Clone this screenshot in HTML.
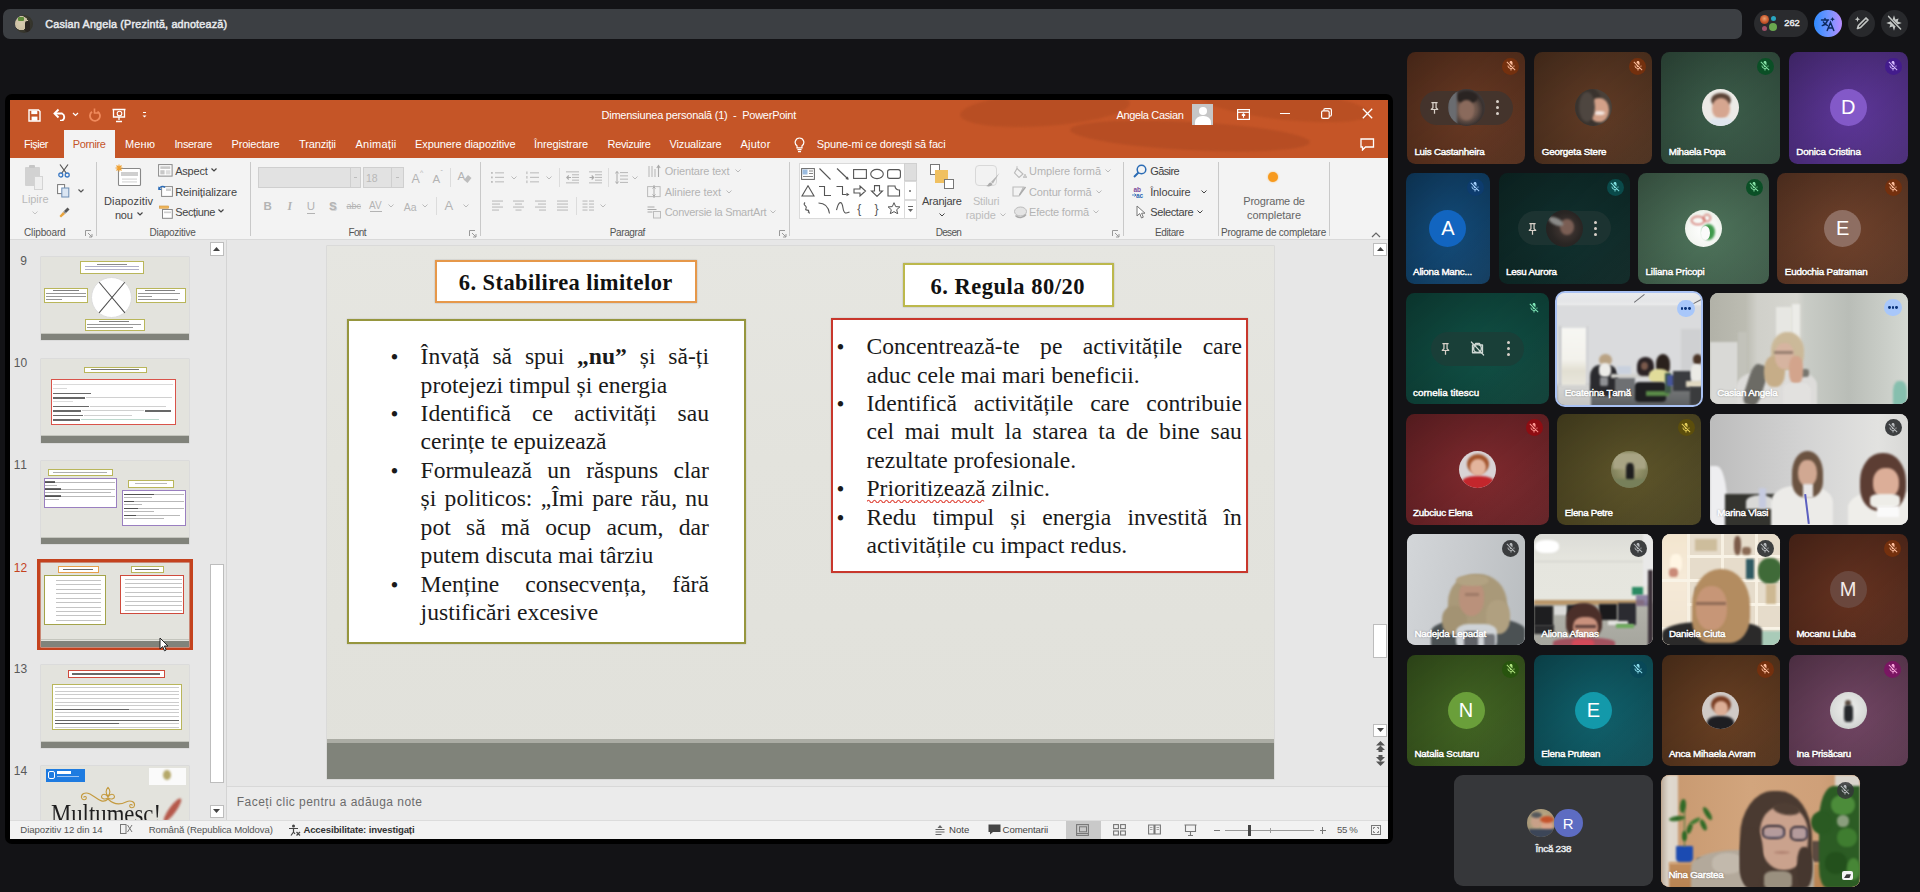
<!DOCTYPE html>
<html><head><meta charset="utf-8"><title>Meet</title><style>
html,body{margin:0;padding:0}
body{width:1920px;height:892px;overflow:hidden;background:#131316;position:relative;font-family:'Liberation Sans',sans-serif}
div,span.t,svg.a{position:absolute;box-sizing:border-box}
span.t{white-space:pre;display:block}
.bl{filter:blur(1.2px)}
</style></head><body>
<div style="left:3.00px;top:9.00px;width:1739.00px;height:30.00px;background:#3c3f43;border-radius:7px;"></div>
<div style="left:15.00px;top:15.00px;width:18.00px;height:18.00px;background:radial-gradient(circle at 35% 45%,#d8cbb0 0,#cbbfa3 45%,#3b3a30 46%,#2a2a24 100%);border-radius:50%;overflow:hidden;"><div style="left:3px;top:2px;width:6px;height:4px;background:#5e8a3a;border-radius:1px"></div><div style="left:10px;top:6px;width:5px;height:11px;background:#2a2622;border-radius:2px"></div></div>
<span class="t" style="left:45.30px;top:18.72px;font:10.8px/1 'Liberation Sans',sans-serif;color:#e8eaed;letter-spacing:0.171px;-webkit-text-stroke:.46px #e8eaed;">Casian Angela (Prezintă, adnotează)</span>
<div style="left:1754.30px;top:9.90px;width:54.00px;height:26.80px;background:#2a2b2e;border-radius:14px;"></div>
<div style="left:1760.00px;top:14.80px;width:9.40px;height:9.40px;background:radial-gradient(circle at 50% 40%,#e8a070 0,#c8562a 55%,#8a3a20 100%);border-radius:50%;"></div>
<div style="left:1770.80px;top:16.00px;width:5.00px;height:5.00px;background:#2aa5c0;border-radius:50%;"></div>
<div style="left:1768.70px;top:23.20px;width:8.20px;height:8.20px;background:#6aa84f;border-radius:50%;"></div>
<div style="left:1761.50px;top:26.30px;width:5.00px;height:5.00px;background:#a0506a;border-radius:50%;"></div>
<span class="t" style="left:1784.30px;top:18.78px;font:9.2px/1 'Liberation Sans',sans-serif;color:#e8eaed;letter-spacing:-0.017px;-webkit-text-stroke:.46px #e8eaed;">262</span>
<div style="left:1814.20px;top:9.50px;width:27.60px;height:27.60px;background:linear-gradient(90deg,#2f8bff 0,#6f95ff 50%,#b98cff 100%);border-radius:50%;"></div>
<svg class="a" style="left:1819.00px;top:14.50px;" width="18" height="18" viewBox="0 0 18 18"><g fill="none" stroke="#0c2a5e" stroke-width="1.5" stroke-linecap="round"><path d="M2.5 5h7M6 3.5v1.5M8.5 5c-.6 2.6-2.4 4.6-5.2 5.6M4.4 7c.8 1.6 2.2 2.8 4 3.4"/><path d="M8.2 15.5l3.3-8 3.3 8M9.4 13h4.2"/></g><path d="M13.5 2l.7 1.6 1.6.7-1.6.7-.7 1.6-.7-1.6-1.6-.7 1.6-.7z" fill="#0c2a5e"/></svg>
<div style="left:1847.90px;top:9.50px;width:27.60px;height:27.60px;background:#28292c;border-radius:50%;"></div>
<svg class="a" style="left:1852.70px;top:14.30px;" width="18" height="18" viewBox="0 0 18 18"><g fill="none" stroke="#c4c7c5" stroke-width="1.7" stroke-linecap="round" stroke-linejoin="round"><path d="M4.5 14.5l1-3 7.5-7.5 2 2-7.5 7.5z"/></g><path d="M4.5 2.5l.8 1.9 1.9.8-1.9.8-.8 1.9-.8-1.9-1.9-.8 1.9-.8z" fill="#c4c7c5"/></svg>
<div style="left:1880.50px;top:9.50px;width:27.60px;height:27.60px;background:#28292c;border-radius:50%;"></div>
<svg class="a" style="left:1885.30px;top:14.30px;" width="18" height="18" viewBox="0 0 18 18"><path d="M9 2.2l1.4 4.2 3.2-1-1 3.2 4.2 1.4-4.2 1.4 1 3.2-3.2-1L9 17.8l-1.4-4.2-3.2 1 1-3.2L1.2 10l4.2-1.4-1-3.2 3.2 1z" fill="#c4c7c5" transform="translate(0,-1)"/><path d="M3 2.5l12.5 13" stroke="#28292c" stroke-width="3"/><path d="M3.6 2.4l12 12.6" stroke="#c4c7c5" stroke-width="1.5" stroke-linecap="round"/></svg>
<div style="left:1407.00px;top:52.00px;width:118.20px;height:111.50px;background:linear-gradient(140deg,rgba(0,0,0,.14) 0,rgba(0,0,0,.04) 40%,rgba(0,0,0,0) 60%,rgba(255,255,255,.03) 100%),radial-gradient(ellipse 75% 80% at 50% 52%,#693923 0,#542e1c 75%,#442517 125%);border-radius:8.5px;overflow:hidden;"></div>
<div style="left:1419.50px;top:90.80px;width:93.20px;height:34.00px;background:rgba(66,52,46,.92);border-radius:17px;"><svg class="a" style="left:7.5px;top:9.5px" width="15" height="15" viewBox="0 0 24 24"><path d="M7 3h10v2h-1.500v7l2.500 2.500v1.500h-5V22h-2v-6H6v-1.500L8.500 12V5H7z M10.500 5v7.800L9 14.300h6l-1.500-1.500V5z" fill="#d8d0c8" fill-rule="evenodd"/></svg><div style="right:13.3px;top:9.4px;width:3.2px;height:3.2px;border-radius:50%;background:#d8d0c8"></div><div style="right:13.3px;top:15.4px;width:3.2px;height:3.2px;border-radius:50%;background:#d8d0c8"></div><div style="right:13.3px;top:21.4px;width:3.2px;height:3.2px;border-radius:50%;background:#d8d0c8"></div></div>
<div style="left:1447.60px;top:89.30px;width:37.00px;height:37.00px;background:radial-gradient(circle at 50% 55%,#8a6e60 0,#6a544a 38%,#3a3230 60%,#4a4a4c 100%);border-radius:50%;overflow:hidden;"><div class="bl" style="left:8px;top:2px;width:22px;height:13px;border-radius:50%;background:#2a2422"></div><div class="bl" style="left:11px;top:11px;width:15px;height:20px;border-radius:45%;background:#8a6a5c"></div><div class="bl" style="left:0;top:0;width:9px;height:37px;background:#6a6c70"></div></div>
<div style="left:1502.10px;top:57.90px;width:17.00px;height:17.00px;background:#74300e;border-radius:50%;filter:blur(.7px);"></div>
<div style="left:1501.60px;top:57.40px;width:18.00px;height:18.00px;"><svg class="a" style="left:3px;top:2.7px" width="12" height="12" viewBox="0 0 24 24"><path fill="#ffbf9f" d="M19 11h-1.700c0 .74-.16 1.430-.430 2.050l1.230 1.230c.56-.98.9-2.090.9-3.280zm-4.020.17c0-.06.02-.11.02-.17V5c0-1.660-1.340-3-3-3S9 3.340 9 5v.18l5.980 5.990zM4.270 3L3 4.270l6.010 6.010V11c0 1.660 1.330 3 2.990 3 .22 0 .44-.03.65-.08l1.660 1.660c-.71.33-1.500.52-2.310.52-2.760 0-5.300-2.100-5.300-5.100H5c0 3.410 2.720 6.230 6 6.720V21h2v-3.280c.91-.13 1.770-.45 2.540-.9L19.730 21 21 19.730 4.270 3z"/></svg></div>
<span class="t" style="left:1414.40px;top:146.77px;font:9.8px/1 'Liberation Sans',sans-serif;color:#fff;letter-spacing:-0.215px;text-shadow:0 0 2px rgba(0,0,0,.55);-webkit-text-stroke:.46px #fff;">Luis Castanheira</span>
<div style="left:1534.30px;top:52.00px;width:118.20px;height:111.50px;background:linear-gradient(140deg,rgba(0,0,0,.14) 0,rgba(0,0,0,.04) 40%,rgba(0,0,0,0) 60%,rgba(255,255,255,.03) 100%),radial-gradient(ellipse 75% 80% at 50% 52%,#613b25 0,#4d301e 75%,#3f2718 125%);border-radius:8.5px;overflow:hidden;"></div>
<div style="left:1575.10px;top:89.30px;width:37.00px;height:37.00px;background:#4a4038;border-radius:50%;overflow:hidden;"><div class="bl" style="left:-2px;top:-2px;width:30px;height:42px;border-radius:50%;background:#3a332e"></div><div class="bl" style="left:14px;top:9px;width:20px;height:24px;border-radius:48%;background:#d2a088"></div><div class="bl" style="left:19px;top:22px;width:11px;height:4px;border-radius:50%;background:#f2e6e0"></div><div class="bl" style="left:4px;top:3px;width:16px;height:30px;border-radius:50%;background:#4e4640"></div></div>
<div style="left:1629.40px;top:57.90px;width:17.00px;height:17.00px;background:#74300e;border-radius:50%;filter:blur(.7px);"></div>
<div style="left:1628.90px;top:57.40px;width:18.00px;height:18.00px;"><svg class="a" style="left:3px;top:2.7px" width="12" height="12" viewBox="0 0 24 24"><path fill="#ffbf9f" d="M19 11h-1.700c0 .74-.16 1.430-.430 2.050l1.230 1.230c.56-.98.9-2.090.9-3.280zm-4.020.17c0-.06.02-.11.02-.17V5c0-1.660-1.340-3-3-3S9 3.340 9 5v.18l5.980 5.990zM4.270 3L3 4.270l6.010 6.010V11c0 1.660 1.330 3 2.990 3 .22 0 .44-.03.65-.08l1.660 1.660c-.71.33-1.500.52-2.310.52-2.760 0-5.300-2.100-5.300-5.100H5c0 3.410 2.720 6.230 6 6.720V21h2v-3.280c.91-.13 1.770-.45 2.540-.9L19.730 21 21 19.730 4.270 3z"/></svg></div>
<span class="t" style="left:1541.70px;top:146.77px;font:9.8px/1 'Liberation Sans',sans-serif;color:#fff;letter-spacing:-0.172px;text-shadow:0 0 2px rgba(0,0,0,.55);-webkit-text-stroke:.46px #fff;">Georgeta Stere</span>
<div style="left:1661.40px;top:52.00px;width:118.60px;height:111.50px;background:linear-gradient(140deg,rgba(0,0,0,.14) 0,rgba(0,0,0,.04) 40%,rgba(0,0,0,0) 60%,rgba(255,255,255,.03) 100%),radial-gradient(ellipse 75% 80% at 50% 52%,#3d5e4b 0,#304b3c 75%,#283d31 125%);border-radius:8.5px;overflow:hidden;"></div>
<div style="left:1702.20px;top:89.30px;width:37.00px;height:37.00px;background:#eceae6;border-radius:50%;overflow:hidden;"><div class="bl" style="left:9px;top:4px;width:20px;height:14px;border-radius:50%;background:#5a4236"></div><div class="bl" style="left:10px;top:9px;width:18px;height:21px;border-radius:48%;background:#d6a690"></div><div class="bl" style="left:6px;top:29px;width:26px;height:12px;border-radius:40%;background:#dfe6ee"></div></div>
<div style="left:1756.90px;top:57.90px;width:17.00px;height:17.00px;background:#0b4f26;border-radius:50%;filter:blur(.7px);"></div>
<div style="left:1756.40px;top:57.40px;width:18.00px;height:18.00px;"><svg class="a" style="left:3px;top:2.7px" width="12" height="12" viewBox="0 0 24 24"><path fill="#86e2a6" d="M19 11h-1.700c0 .74-.16 1.430-.430 2.050l1.230 1.230c.56-.98.9-2.090.9-3.280zm-4.020.17c0-.06.02-.11.02-.17V5c0-1.660-1.340-3-3-3S9 3.340 9 5v.18l5.980 5.990zM4.270 3L3 4.270l6.010 6.010V11c0 1.660 1.330 3 2.990 3 .22 0 .44-.03.65-.08l1.660 1.660c-.71.33-1.500.52-2.310.52-2.760 0-5.300-2.100-5.300-5.100H5c0 3.410 2.720 6.230 6 6.720V21h2v-3.280c.91-.13 1.770-.45 2.540-.9L19.730 21 21 19.730 4.270 3z"/></svg></div>
<span class="t" style="left:1668.80px;top:146.77px;font:9.8px/1 'Liberation Sans',sans-serif;color:#fff;letter-spacing:-0.286px;text-shadow:0 0 2px rgba(0,0,0,.55);-webkit-text-stroke:.46px #fff;">Mihaela Popa</span>
<div style="left:1788.80px;top:52.00px;width:118.80px;height:111.50px;background:linear-gradient(140deg,rgba(0,0,0,.14) 0,rgba(0,0,0,.04) 40%,rgba(0,0,0,0) 60%,rgba(255,255,255,.03) 100%),radial-gradient(ellipse 75% 80% at 50% 52%,#5e379a 0,#4b2c7b 75%,#3d2465 125%);border-radius:8.5px;overflow:hidden;"></div>
<div style="left:1829.70px;top:89.30px;width:37.00px;height:37.00px;background:#8359c8;border-radius:50%;"><span class="t" style="left:0;top:0;width:37px;height:37px;line-height:37.5px;text-align:center;font-size:20px;color:#fff">D</span></div>
<div style="left:1884.50px;top:57.90px;width:17.00px;height:17.00px;background:#431c8c;border-radius:50%;filter:blur(.7px);"></div>
<div style="left:1884.00px;top:57.40px;width:18.00px;height:18.00px;"><svg class="a" style="left:3px;top:2.7px" width="12" height="12" viewBox="0 0 24 24"><path fill="#d6bdff" d="M19 11h-1.700c0 .74-.16 1.430-.430 2.050l1.230 1.230c.56-.98.9-2.090.9-3.280zm-4.020.17c0-.06.02-.11.02-.17V5c0-1.660-1.340-3-3-3S9 3.340 9 5v.18l5.980 5.990zM4.270 3L3 4.270l6.010 6.010V11c0 1.660 1.330 3 2.990 3 .22 0 .44-.03.65-.08l1.660 1.660c-.71.33-1.500.52-2.310.52-2.760 0-5.300-2.100-5.300-5.100H5c0 3.410 2.720 6.230 6 6.720V21h2v-3.280c.91-.13 1.770-.45 2.540-.9L19.730 21 21 19.730 4.270 3z"/></svg></div>
<span class="t" style="left:1796.20px;top:146.77px;font:9.8px/1 'Liberation Sans',sans-serif;color:#fff;letter-spacing:-0.123px;text-shadow:0 0 2px rgba(0,0,0,.55);-webkit-text-stroke:.46px #fff;">Donica Cristina</span>
<div style="left:1405.70px;top:172.60px;width:84.10px;height:111.00px;background:linear-gradient(140deg,rgba(0,0,0,.14) 0,rgba(0,0,0,.04) 40%,rgba(0,0,0,0) 60%,rgba(255,255,255,.03) 100%),radial-gradient(ellipse 75% 80% at 50% 52%,#134b79 0,#0f3c61 75%,#0c314f 125%);border-radius:8.5px;overflow:hidden;"></div>
<div style="left:1429.30px;top:209.90px;width:37.00px;height:37.00px;background:#1265c0;border-radius:50%;"><span class="t" style="left:0;top:0;width:37px;height:37px;line-height:37.5px;text-align:center;font-size:20px;color:#fff">A</span></div>
<div style="left:1466.70px;top:178.50px;width:17.00px;height:17.00px;background:#0d3c6e;border-radius:50%;filter:blur(.7px);"></div>
<div style="left:1466.20px;top:178.00px;width:18.00px;height:18.00px;"><svg class="a" style="left:3px;top:2.7px" width="12" height="12" viewBox="0 0 24 24"><path fill="#a3cffc" d="M19 11h-1.700c0 .74-.16 1.430-.430 2.050l1.230 1.230c.56-.98.9-2.090.9-3.280zm-4.020.17c0-.06.02-.11.02-.17V5c0-1.660-1.340-3-3-3S9 3.340 9 5v.18l5.980 5.990zM4.270 3L3 4.270l6.010 6.010V11c0 1.660 1.330 3 2.990 3 .22 0 .44-.03.65-.08l1.660 1.660c-.71.33-1.500.52-2.310.52-2.760 0-5.300-2.100-5.300-5.100H5c0 3.410 2.720 6.230 6 6.720V21h2v-3.280c.91-.13 1.770-.45 2.540-.9L19.730 21 21 19.730 4.270 3z"/></svg></div>
<span class="t" style="left:1413.10px;top:266.87px;font:9.8px/1 'Liberation Sans',sans-serif;color:#fff;letter-spacing:-0.236px;text-shadow:0 0 2px rgba(0,0,0,.55);-webkit-text-stroke:.46px #fff;">Aliona Manc...</span>
<div style="left:1498.60px;top:172.60px;width:131.10px;height:111.00px;background:linear-gradient(140deg,rgba(0,0,0,.14) 0,rgba(0,0,0,.04) 40%,rgba(0,0,0,0) 60%,rgba(255,255,255,.03) 100%),radial-gradient(ellipse 75% 80% at 50% 52%,#10302e 0,#0d2725 75%,#0b201e 125%);border-radius:8.5px;overflow:hidden;"></div>
<div style="left:1517.50px;top:211.40px;width:93.20px;height:34.00px;background:rgba(30,52,50,.95);border-radius:17px;"><svg class="a" style="left:7.5px;top:9.5px" width="15" height="15" viewBox="0 0 24 24"><path d="M7 3h10v2h-1.500v7l2.500 2.500v1.500h-5V22h-2v-6H6v-1.500L8.500 12V5H7z M10.500 5v7.800L9 14.300h6l-1.500-1.500V5z" fill="#d8d0c8" fill-rule="evenodd"/></svg><div style="right:13.3px;top:9.4px;width:3.2px;height:3.2px;border-radius:50%;background:#d8d0c8"></div><div style="right:13.3px;top:15.4px;width:3.2px;height:3.2px;border-radius:50%;background:#d8d0c8"></div><div style="right:13.3px;top:21.4px;width:3.2px;height:3.2px;border-radius:50%;background:#d8d0c8"></div></div>
<div style="left:1545.60px;top:209.90px;width:37.00px;height:37.00px;background:radial-gradient(circle at 55% 50%,#4a3c38 0,#2a2624 55%,#1e1e1e 100%);border-radius:50%;overflow:hidden;"><div class="bl" style="left:14px;top:9px;width:14px;height:16px;border-radius:50%;background:#7a5e54"></div><div class="bl" style="left:2px;top:8px;width:16px;height:7px;border-radius:50%;background:#8a8a88;transform:rotate(25deg)"></div></div>
<div style="left:1606.60px;top:178.50px;width:17.00px;height:17.00px;background:#0a4a4a;border-radius:50%;filter:blur(.7px);"></div>
<div style="left:1606.10px;top:178.00px;width:18.00px;height:18.00px;"><svg class="a" style="left:3px;top:2.7px" width="12" height="12" viewBox="0 0 24 24"><path fill="#80e0e0" d="M19 11h-1.700c0 .74-.16 1.430-.430 2.050l1.230 1.230c.56-.98.9-2.090.9-3.280zm-4.020.17c0-.06.02-.11.02-.17V5c0-1.660-1.340-3-3-3S9 3.340 9 5v.18l5.980 5.990zM4.270 3L3 4.270l6.010 6.010V11c0 1.660 1.330 3 2.990 3 .22 0 .44-.03.65-.08l1.660 1.660c-.71.33-1.500.52-2.310.52-2.760 0-5.300-2.100-5.300-5.100H5c0 3.410 2.720 6.230 6 6.720V21h2v-3.280c.91-.13 1.770-.45 2.540-.9L19.730 21 21 19.730 4.270 3z"/></svg></div>
<span class="t" style="left:1506.00px;top:266.87px;font:9.8px/1 'Liberation Sans',sans-serif;color:#fff;letter-spacing:-0.186px;text-shadow:0 0 2px rgba(0,0,0,.55);-webkit-text-stroke:.46px #fff;">Lesu Aurora</span>
<div style="left:1638.10px;top:172.60px;width:130.90px;height:111.00px;background:linear-gradient(140deg,rgba(0,0,0,.14) 0,rgba(0,0,0,.04) 40%,rgba(0,0,0,0) 60%,rgba(255,255,255,.03) 100%),radial-gradient(ellipse 75% 80% at 50% 52%,#4f755c 0,#3f5d4a 75%,#344c3c 125%);border-radius:8.5px;overflow:hidden;"></div>
<div style="left:1685.00px;top:209.90px;width:37.00px;height:37.00px;background:radial-gradient(circle at 50% 55%,#fff 0,#f4f6f2 55%,#dfe9dc 100%);border-radius:50%;overflow:hidden;"><div class="bl" style="left:17px;top:14px;width:13px;height:16px;border-radius:50%;background:#3f9a4c"></div><div style="left:16px;top:16px;width:9px;height:14px;border-radius:50% 50% 50% 50%;background:#fbfbfb"></div><div class="bl" style="left:6px;top:6px;width:14px;height:9px;border-radius:50%;border:1.600px solid #c23a30"></div><div class="bl" style="left:18px;top:4px;width:8px;height:8px;border-radius:50%;border:1.400px solid #c23a30"></div></div>
<div style="left:1745.90px;top:178.50px;width:17.00px;height:17.00px;background:#0b4f26;border-radius:50%;filter:blur(.7px);"></div>
<div style="left:1745.40px;top:178.00px;width:18.00px;height:18.00px;"><svg class="a" style="left:3px;top:2.7px" width="12" height="12" viewBox="0 0 24 24"><path fill="#86e2a6" d="M19 11h-1.700c0 .74-.16 1.430-.430 2.050l1.230 1.230c.56-.98.9-2.090.9-3.280zm-4.020.17c0-.06.02-.11.02-.17V5c0-1.660-1.340-3-3-3S9 3.340 9 5v.18l5.980 5.990zM4.270 3L3 4.270l6.010 6.010V11c0 1.660 1.330 3 2.990 3 .22 0 .44-.03.65-.08l1.660 1.660c-.71.33-1.500.52-2.310.52-2.760 0-5.300-2.100-5.300-5.100H5c0 3.410 2.720 6.230 6 6.720V21h2v-3.280c.91-.13 1.770-.45 2.540-.9L19.730 21 21 19.730 4.270 3z"/></svg></div>
<span class="t" style="left:1645.50px;top:266.87px;font:9.8px/1 'Liberation Sans',sans-serif;color:#fff;letter-spacing:-0.121px;text-shadow:0 0 2px rgba(0,0,0,.55);-webkit-text-stroke:.46px #fff;">Liliana Pricopi</span>
<div style="left:1777.40px;top:172.60px;width:130.50px;height:111.00px;background:linear-gradient(140deg,rgba(0,0,0,.14) 0,rgba(0,0,0,.04) 40%,rgba(0,0,0,0) 60%,rgba(255,255,255,.03) 100%),radial-gradient(ellipse 75% 80% at 50% 52%,#70422c 0,#5a3523 75%,#492b1d 125%);border-radius:8.5px;overflow:hidden;"></div>
<div style="left:1824.10px;top:209.90px;width:37.00px;height:37.00px;background:#8e6e62;border-radius:50%;"><span class="t" style="left:0;top:0;width:37px;height:37px;line-height:37.5px;text-align:center;font-size:20px;color:#fff">E</span></div>
<div style="left:1884.80px;top:178.50px;width:17.00px;height:17.00px;background:#74300e;border-radius:50%;filter:blur(.7px);"></div>
<div style="left:1884.30px;top:178.00px;width:18.00px;height:18.00px;"><svg class="a" style="left:3px;top:2.7px" width="12" height="12" viewBox="0 0 24 24"><path fill="#ffbf9f" d="M19 11h-1.700c0 .74-.16 1.430-.430 2.050l1.230 1.230c.56-.98.9-2.090.9-3.280zm-4.020.17c0-.06.02-.11.02-.17V5c0-1.660-1.340-3-3-3S9 3.340 9 5v.18l5.980 5.990zM4.270 3L3 4.270l6.010 6.010V11c0 1.660 1.330 3 2.990 3 .22 0 .44-.03.65-.08l1.660 1.660c-.71.33-1.500.52-2.310.52-2.760 0-5.300-2.100-5.300-5.100H5c0 3.410 2.720 6.230 6 6.720V21h2v-3.280c.91-.13 1.770-.45 2.540-.9L19.730 21 21 19.730 4.270 3z"/></svg></div>
<span class="t" style="left:1784.80px;top:266.87px;font:9.8px/1 'Liberation Sans',sans-serif;color:#fff;letter-spacing:-0.199px;text-shadow:0 0 2px rgba(0,0,0,.55);-webkit-text-stroke:.46px #fff;">Eudochia Patraman</span>
<div style="left:1405.70px;top:292.80px;width:143.00px;height:111.70px;background:linear-gradient(140deg,rgba(0,0,0,.14) 0,rgba(0,0,0,.04) 40%,rgba(0,0,0,0) 60%,rgba(255,255,255,.03) 100%),radial-gradient(ellipse 75% 80% at 50% 52%,#105045 0,#0d4037 75%,#0b352d 125%);border-radius:8.5px;overflow:hidden;"></div>
<div style="left:1430.60px;top:331.60px;width:93.20px;height:34.00px;background:rgba(26,62,56,.96);border-radius:17px;"><svg class="a" style="left:7.5px;top:9.5px" width="15" height="15" viewBox="0 0 24 24"><path d="M7 3h10v2h-1.500v7l2.500 2.500v1.500h-5V22h-2v-6H6v-1.500L8.500 12V5H7z M10.500 5v7.800L9 14.300h6l-1.500-1.500V5z" fill="#d8d0c8" fill-rule="evenodd"/></svg><div style="right:13.3px;top:9.4px;width:3.2px;height:3.2px;border-radius:50%;background:#d8d0c8"></div><div style="right:13.3px;top:15.4px;width:3.2px;height:3.2px;border-radius:50%;background:#d8d0c8"></div><div style="right:13.3px;top:21.4px;width:3.2px;height:3.2px;border-radius:50%;background:#d8d0c8"></div><svg class="a" style="left:38px;top:8.500px" width="17" height="17" viewBox="0 0 24 24"><g fill="none" stroke="#cfd8d4" stroke-width="2"><circle cx="12" cy="12" r="5.500"/><path d="M5 7h3l1.500-2h5L16 7h3v11H5z" stroke-linejoin="round"/><path d="M3.500 3l17 18" stroke-linecap="round"/></g></svg></div>
<div style="left:1525.10px;top:298.90px;width:18.00px;height:18.00px;"><svg class="a" style="left:3px;top:2.7px" width="12" height="12" viewBox="0 0 24 24"><path fill="#7fe6b8" d="M19 11h-1.700c0 .74-.16 1.430-.430 2.050l1.230 1.230c.56-.98.9-2.090.9-3.280zm-4.020.17c0-.06.02-.11.02-.17V5c0-1.660-1.340-3-3-3S9 3.340 9 5v.18l5.980 5.990zM4.270 3L3 4.270l6.010 6.010V11c0 1.660 1.330 3 2.990 3 .22 0 .44-.03.65-.08l1.660 1.660c-.71.33-1.500.52-2.310.52-2.760 0-5.300-2.100-5.300-5.100H5c0 3.410 2.720 6.230 6 6.720V21h2v-3.280c.91-.13 1.770-.45 2.540-.9L19.730 21 21 19.730 4.270 3z"/></svg></div>
<span class="t" style="left:1413.10px;top:387.77px;font:9.8px/1 'Liberation Sans',sans-serif;color:#fff;letter-spacing:0.052px;text-shadow:0 0 2px rgba(0,0,0,.55);-webkit-text-stroke:.46px #fff;">cornelia titescu</span>
<div style="left:1554.90px;top:290.90px;width:148.20px;height:116.20px;background:#dadbdd;border-radius:10px;overflow:hidden;border:2.700px solid #a9c1f3;"><div style="left:0px;top:0px;width:146px;height:12px;background:linear-gradient(#e9eaec,#e2e3e5);"></div><div class="bl" style="left:0px;top:10px;width:146px;height:2.2px;background:#eceded;"></div><div class="bl" style="left:0px;top:92px;width:146px;height:22px;background:linear-gradient(#7b7d7e,#5c5f61);"></div><div class="bl" style="left:0px;top:90px;width:34px;height:24px;background:linear-gradient(#d6d6d4,#c4c4c2);"></div><div class="bl" style="left:4.5px;top:35px;width:25px;height:57px;background:linear-gradient(#f7f7f3 0,#f3f2ec 55%,#e2dfd2 75%,#e8e6dc 100%);"></div><div class="bl" style="left:2.6px;top:33px;width:1.6px;height:60px;background:#c6c7c8;"></div><div class="bl" style="left:30px;top:33px;width:1.6px;height:60px;background:#c9cacb;"></div><div class="bl" style="left:124.5px;top:36px;width:20px;height:42px;background:#cfd0d2;"></div><div class="bl" style="left:33px;top:72px;width:28px;height:31px;background:#2a2a2e;border-radius:35% 35% 15% 15%"></div><div class="bl" style="left:42.5px;top:61px;width:12.5px;height:12px;background:#b9a283;border-radius:50%"></div><div class="bl" style="left:42px;top:70px;width:12px;height:14px;background:#ecebe8;border-radius:40%"></div><div class="bl" style="left:43px;top:84px;width:8px;height:9px;background:#8f9094;border-radius:20%"></div><div class="bl" style="left:54px;top:81px;width:46px;height:4.5px;background:#d2d2cd;"></div><div class="bl" style="left:60px;top:73px;width:14px;height:8px;background:#c9d1de;"></div><div class="bl" style="left:58px;top:85px;width:20px;height:16px;background:#6e7073;"></div><div class="bl" style="left:80px;top:64px;width:17px;height:19px;background:#2b2325;border-radius:45% 45% 30% 30%"></div><div class="bl" style="left:84px;top:69px;width:7px;height:8px;background:#7a5a4c;border-radius:50%"></div><div class="bl" style="left:99px;top:61px;width:14px;height:20px;background:#2a211c;border-radius:48% 48% 35% 35%"></div><div class="bl" style="left:92px;top:76px;width:20px;height:14px;background:#e1dc9a;border-radius:40%"></div><div class="bl" style="left:78px;top:89.5px;width:31px;height:20px;background:#1f1f21;border-radius:15%"></div><div class="bl" style="left:89.5px;top:98px;width:22.5px;height:5.5px;background:#5a8a48;"></div><div class="bl" style="left:108px;top:80px;width:6px;height:20px;background:#3f5a46;"></div><div class="bl" style="left:110.5px;top:82.5px;width:8.5px;height:11px;background:#46559a;"></div><div class="bl" style="left:116px;top:78.5px;width:18.5px;height:20px;background:#3a3c40;"></div><div class="bl" style="left:136px;top:61.5px;width:9px;height:11px;background:#4a3426;border-radius:50%"></div><div class="bl" style="left:134px;top:71.5px;width:11px;height:17px;background:#ecebe6;border-radius:35%"></div><div class="bl" style="left:129.5px;top:88px;width:16px;height:6px;background:#e0d8c2;"></div><div class="bl" style="left:133px;top:94px;width:13px;height:18px;background:#3a3b3d;"></div><div style="left:76.500px;top:5px;width:12.500px;height:1.300px;background:#6c6d72;transform:rotate(-38deg)"></div><div style="left:136px;top:8px;width:9px;height:1.300px;background:#6c6d72;transform:rotate(-28deg)"></div></div>
<div style="left:1677.10px;top:299.60px;width:17.60px;height:17.60px;background:#a8c7fa;border-radius:50%;"><div style="left:3.6px;top:7.4px;width:2.8px;height:2.8px;border-radius:50%;background:#0a337a"></div><div style="left:7.4px;top:7.4px;width:2.8px;height:2.8px;border-radius:50%;background:#0a337a"></div><div style="left:11.2px;top:7.4px;width:2.8px;height:2.8px;border-radius:50%;background:#0a337a"></div></div>
<span class="t" style="left:1564.80px;top:387.77px;font:9.8px/1 'Liberation Sans',sans-serif;color:#fff;letter-spacing:-0.235px;text-shadow:0 0 2px rgba(0,0,0,.55);-webkit-text-stroke:.46px #fff;">Ecaterina Țarnă</span>
<div style="left:1709.80px;top:292.80px;width:198.10px;height:111.70px;background:#cdcfc8;border-radius:8.500px;overflow:hidden;"><div style="left:0.0px;top:0.0px;width:198.2px;height:112.1px;background:linear-gradient(90deg,#b2b2a8 0,#bcbcb2 18%,#d0d0ca 24%,#d6d6d0 44%,#c9ccc6 48%,#b9bdb7 70%,#cdd1cb 92%,#d4d8d2 100%);"></div><div class="bl" style="left:66.5px;top:14.3px;width:16.1px;height:37.8px;background:#e7e7e3;"></div><div class="bl" style="left:82.7px;top:11.5px;width:7.7px;height:40.6px;background:#ecece8;"></div><div class="bl" style="left:0.0px;top:49.3px;width:28.7px;height:62.8px;background:#d9d9d6;"></div><div class="bl" style="left:28.7px;top:39.5px;width:8.4px;height:72.6px;background:#c2c2ba;"></div><div class="bl" style="left:26.6px;top:75.9px;width:80.6px;height:39.2px;background:#dddcda;border-radius:45% 40% 0 0"></div><div class="bl" style="left:37.1px;top:71.7px;width:16.8px;height:42.0px;background:#6c6b65;border-radius:30%;transform:rotate(18deg)"></div><div class="bl" style="left:90.4px;top:75.9px;width:9.1px;height:8.4px;background:#77756e;border-radius:30%"></div><div class="bl" style="left:60.9px;top:38.8px;width:32.9px;height:38.5px;background:#cbb999;border-radius:48% 48% 40% 40%"></div><div class="bl" style="left:54.6px;top:63.3px;width:20.3px;height:30.8px;background:#c6ad88;border-radius:45%"></div><div class="bl" style="left:65.1px;top:50.7px;width:19.6px;height:25.2px;background:#d6b4a0;border-radius:45%"></div><div class="bl" style="left:64.4px;top:58.0px;width:18.9px;height:2.8px;background:#5a4a42;opacity:.5"></div><div class="bl" style="left:79.2px;top:63.3px;width:14.0px;height:28.0px;background:#d3a48c;border-radius:40%"></div><div class="bl" style="left:73.6px;top:89.9px;width:28.0px;height:22.1px;background:#e2e1df;border-radius:30% 30% 0 0"></div><div class="bl" style="left:183.5px;top:88.5px;width:13.3px;height:25.2px;background:#86bfae;border-radius:40% 40% 0 0"></div></div>
<div style="left:1884.30px;top:298.80px;width:17.60px;height:17.60px;background:#a8c7fa;border-radius:50%;"><div style="left:3.6px;top:7.4px;width:2.8px;height:2.8px;border-radius:50%;background:#0a337a"></div><div style="left:7.4px;top:7.4px;width:2.8px;height:2.8px;border-radius:50%;background:#0a337a"></div><div style="left:11.2px;top:7.4px;width:2.8px;height:2.8px;border-radius:50%;background:#0a337a"></div></div>
<span class="t" style="left:1717.20px;top:387.77px;font:9.8px/1 'Liberation Sans',sans-serif;color:#fff;letter-spacing:-0.231px;text-shadow:0 0 2px rgba(0,0,0,.55);-webkit-text-stroke:.46px #fff;">Casian Angela</span>
<div style="left:1405.70px;top:413.50px;width:143.00px;height:111.50px;background:linear-gradient(140deg,rgba(0,0,0,.14) 0,rgba(0,0,0,.04) 40%,rgba(0,0,0,0) 60%,rgba(255,255,255,.03) 100%),radial-gradient(ellipse 75% 80% at 50% 52%,#802a2e 0,#662125 75%,#541b1e 125%);border-radius:8.5px;overflow:hidden;"></div>
<div style="left:1458.70px;top:450.80px;width:37.00px;height:37.00px;background:#d9d3d6;border-radius:50%;overflow:hidden;"><div class="bl" style="left:8px;top:3px;width:22px;height:20px;border-radius:50%;background:#a3552e"></div><div class="bl" style="left:11px;top:8px;width:16px;height:17px;border-radius:48%;background:#e3b49c"></div><div class="bl" style="left:3px;top:25px;width:32px;height:16px;border-radius:40% 40% 0 0;background:#c3262c"></div></div>
<div style="left:1525.60px;top:419.40px;width:17.00px;height:17.00px;background:#8f0d12;border-radius:50%;filter:blur(.7px);"></div>
<div style="left:1525.10px;top:418.90px;width:18.00px;height:18.00px;"><svg class="a" style="left:3px;top:2.7px" width="12" height="12" viewBox="0 0 24 24"><path fill="#ff9892" d="M19 11h-1.700c0 .74-.16 1.430-.430 2.050l1.230 1.230c.56-.98.9-2.090.9-3.280zm-4.020.17c0-.06.02-.11.02-.17V5c0-1.660-1.340-3-3-3S9 3.340 9 5v.18l5.980 5.990zM4.270 3L3 4.270l6.010 6.010V11c0 1.660 1.330 3 2.990 3 .22 0 .44-.03.65-.08l1.660 1.660c-.71.33-1.500.52-2.310.52-2.760 0-5.300-2.100-5.300-5.100H5c0 3.410 2.720 6.230 6 6.720V21h2v-3.280c.91-.13 1.770-.45 2.540-.9L19.730 21 21 19.730 4.270 3z"/></svg></div>
<span class="t" style="left:1413.10px;top:508.27px;font:9.8px/1 'Liberation Sans',sans-serif;color:#fff;letter-spacing:-0.223px;text-shadow:0 0 2px rgba(0,0,0,.55);-webkit-text-stroke:.46px #fff;">Zubciuc Elena</span>
<div style="left:1557.40px;top:413.50px;width:143.30px;height:111.50px;background:linear-gradient(140deg,rgba(0,0,0,.14) 0,rgba(0,0,0,.04) 40%,rgba(0,0,0,0) 60%,rgba(255,255,255,.03) 100%),radial-gradient(ellipse 75% 80% at 50% 52%,#5e552a 0,#4b4421 75%,#3d371b 125%);border-radius:8.5px;overflow:hidden;"></div>
<div style="left:1610.50px;top:450.80px;width:37.00px;height:37.00px;background:radial-gradient(circle at 50% 40%,#b0a888 0,#8a8a62 50%,#6a6a4a 100%);border-radius:50%;overflow:hidden;"><div class="bl" style="left:2px;top:2px;width:33px;height:16px;background:#a8a484"></div><div class="bl" style="left:15px;top:12px;width:8px;height:20px;border-radius:30%;background:#1e1e1e"></div><div class="bl" style="left:0;top:28px;width:37px;height:9px;background:#77805a"></div></div>
<div style="left:1677.60px;top:419.40px;width:17.00px;height:17.00px;background:#5c4e0c;border-radius:50%;filter:blur(.7px);"></div>
<div style="left:1677.10px;top:418.90px;width:18.00px;height:18.00px;"><svg class="a" style="left:3px;top:2.7px" width="12" height="12" viewBox="0 0 24 24"><path fill="#e6cf5a" d="M19 11h-1.700c0 .74-.16 1.430-.430 2.050l1.230 1.230c.56-.98.9-2.090.9-3.280zm-4.020.17c0-.06.02-.11.02-.17V5c0-1.660-1.340-3-3-3S9 3.340 9 5v.18l5.980 5.990zM4.270 3L3 4.270l6.010 6.010V11c0 1.660 1.330 3 2.990 3 .22 0 .44-.03.65-.08l1.660 1.660c-.71.33-1.500.52-2.310.52-2.760 0-5.300-2.100-5.300-5.100H5c0 3.410 2.720 6.230 6 6.720V21h2v-3.280c.91-.13 1.770-.45 2.540-.9L19.730 21 21 19.730 4.270 3z"/></svg></div>
<span class="t" style="left:1564.80px;top:508.27px;font:9.8px/1 'Liberation Sans',sans-serif;color:#fff;letter-spacing:-0.310px;text-shadow:0 0 2px rgba(0,0,0,.55);-webkit-text-stroke:.46px #fff;">Elena Petre</span>
<div style="left:1709.80px;top:413.50px;width:198.10px;height:111.50px;background:#d0d0d0;border-radius:8.500px;overflow:hidden;"><div style="left:0;top:0;width:198px;height:112px;background:linear-gradient(90deg,#bcbcbc,#d2d2d2 45%,#e2e2e0 85%,#d8d8d6)"></div><div class="bl" style="left:0;top:52px;width:17px;height:62px;border-radius:0 60% 0 0;background:#eeeef0"></div><div class="bl" style="left:15px;top:80px;width:50px;height:34px;background:#34342f"></div><div class="bl" style="left:36px;top:81px;width:28px;height:14px;border-radius:50% 50% 0 0;background:#d9d9d7"></div><div class="bl" style="left:49px;top:74px;width:7px;height:20px;background:#c6cbe0"></div><div class="bl" style="left:61px;top:72px;width:62px;height:44px;border-radius:38% 38% 0 0;background:#ecebe8"></div><div class="bl" style="left:82px;top:37px;width:31px;height:46px;border-radius:48% 48% 35% 35%;background:#6b5341"></div><div class="bl" style="left:88px;top:46px;width:19px;height:26px;border-radius:45%;background:#d1a892"></div><div class="bl" style="left:93px;top:70px;width:10px;height:14px;background:#e8e6e6"></div><div style="left:96px;top:80px;width:1.500px;height:30px;background:#5b5fc0;transform:rotate(-7deg)"></div><div class="bl" style="left:138px;top:78px;width:62px;height:38px;border-radius:42% 0 0 0;background:#efeeea"></div><div class="bl" style="left:150px;top:39px;width:46px;height:58px;border-radius:48% 48% 40% 40%;background:#5c3d33"></div><div class="bl" style="left:163px;top:54px;width:26px;height:30px;border-radius:45%;background:#dcae98"></div><div class="bl" style="left:160px;top:80px;width:30px;height:14px;border-radius:30%;background:#eeede8"></div><div class="bl" style="left:167px;top:92px;width:22px;height:11px;background:#fafafa"></div></div>
<div style="left:1884.80px;top:419.40px;width:17.00px;height:17.00px;background:rgba(52,54,56,.95);border-radius:50%;filter:blur(.7px);"></div>
<div style="left:1884.30px;top:418.90px;width:18.00px;height:18.00px;"><svg class="a" style="left:3px;top:2.7px" width="12" height="12" viewBox="0 0 24 24"><path fill="#b8bbbe" d="M19 11h-1.700c0 .74-.16 1.430-.430 2.050l1.230 1.230c.56-.98.9-2.090.9-3.280zm-4.020.17c0-.06.02-.11.02-.17V5c0-1.660-1.340-3-3-3S9 3.340 9 5v.18l5.980 5.990zM4.270 3L3 4.270l6.010 6.010V11c0 1.660 1.330 3 2.990 3 .22 0 .44-.03.65-.08l1.660 1.660c-.71.33-1.500.52-2.310.52-2.760 0-5.300-2.100-5.300-5.100H5c0 3.410 2.720 6.230 6 6.720V21h2v-3.280c.91-.13 1.770-.45 2.540-.9L19.730 21 21 19.730 4.270 3z"/></svg></div>
<span class="t" style="left:1717.20px;top:508.27px;font:9.8px/1 'Liberation Sans',sans-serif;color:#fff;letter-spacing:-0.235px;text-shadow:0 0 2px rgba(0,0,0,.55);-webkit-text-stroke:.46px #fff;">Marina Vlasi</span>
<div style="left:1407.00px;top:533.80px;width:118.10px;height:111.70px;background:#c8cace;border-radius:8.500px;overflow:hidden;"><div style="left:0.0px;top:0.0px;width:118.2px;height:113.8px;background:linear-gradient(100deg,#d3d6d9 0,#c8cbce 45%,#b9bdc0 100%);"></div><div class="bl" style="left:24.3px;top:85.3px;width:93.9px;height:31.3px;background:#4b5153;border-radius:40% 35% 0 0"></div><div class="bl" style="left:41.0px;top:40.1px;width:59.1px;height:61.2px;background:#a99979;border-radius:46% 48% 38% 40%"></div><div class="bl" style="left:34.8px;top:72.0px;width:25.0px;height:29.2px;background:#a39373;border-radius:45%"></div><div class="bl" style="left:79.3px;top:66.5px;width:23.6px;height:33.4px;background:#b0a080;border-radius:45%"></div><div class="bl" style="left:51.5px;top:47.7px;width:25.7px;height:34.1px;background:#ba917b;border-radius:42% 42% 48% 48%"></div><div class="bl" style="left:48.7px;top:40.8px;width:33.4px;height:11.8px;background:#b2a282;border-radius:50%"></div><div class="bl" style="left:48.7px;top:90.1px;width:41.7px;height:26.4px;background:#cfd3d7;border-radius:30%"></div><div class="bl" style="left:57.0px;top:97.1px;width:13.9px;height:19.5px;background:#44464c;border-radius:20%;opacity:.8"></div><div class="bl" style="left:76.5px;top:99.9px;width:11.1px;height:16.7px;background:#4a4c52;border-radius:20%;opacity:.7"></div><div class="bl" style="left:58.4px;top:59.5px;width:13.9px;height:2.8px;background:#6a5044;opacity:.35"></div></div>
<div style="left:1502.00px;top:539.70px;width:17.00px;height:17.00px;background:rgba(52,54,56,.95);border-radius:50%;filter:blur(.7px);"></div>
<div style="left:1501.50px;top:539.20px;width:18.00px;height:18.00px;"><svg class="a" style="left:3px;top:2.7px" width="12" height="12" viewBox="0 0 24 24"><path fill="#b8bbbe" d="M19 11h-1.700c0 .74-.16 1.430-.430 2.050l1.230 1.230c.56-.98.9-2.090.9-3.280zm-4.020.17c0-.06.02-.11.02-.17V5c0-1.660-1.340-3-3-3S9 3.340 9 5v.18l5.980 5.990zM4.270 3L3 4.270l6.010 6.010V11c0 1.660 1.330 3 2.990 3 .22 0 .44-.03.65-.08l1.660 1.660c-.71.33-1.500.52-2.310.52-2.760 0-5.300-2.100-5.300-5.100H5c0 3.410 2.720 6.230 6 6.720V21h2v-3.280c.91-.13 1.770-.45 2.540-.9L19.730 21 21 19.730 4.270 3z"/></svg></div>
<span class="t" style="left:1414.40px;top:628.77px;font:9.8px/1 'Liberation Sans',sans-serif;color:#fff;letter-spacing:-0.197px;text-shadow:0 0 2px rgba(0,0,0,.55);-webkit-text-stroke:.46px #fff;">Nadejda Lepadat</span>
<div style="left:1533.90px;top:533.80px;width:118.80px;height:111.70px;background:#dcdcd8;border-radius:8.500px;overflow:hidden;"><div style="left:0.0px;top:0.0px;width:118.9px;height:113.8px;background:linear-gradient(#dcdcd7 0,#e5e5de 22%,#e6e6df 58%,#b2b2aa 62%,#a5a59d 100%);"></div><div class="bl" style="left:0.7px;top:6.0px;width:24.8px;height:12.9px;background:#ffffff;border-radius:40%"></div><div class="bl" style="left:0.0px;top:27.0px;width:110.6px;height:1.4px;background:#cfcfca;"></div><div class="bl" style="left:109.2px;top:0.0px;width:9.7px;height:52.6px;background:#e9e9e8;"></div><div class="bl" style="left:0.0px;top:66.2px;width:109.9px;height:4.7px;background:#b9976b;"></div><div class="bl" style="left:20.2px;top:72.0px;width:12.5px;height:9.0px;background:#dadad8;"></div><div class="bl" style="left:0.0px;top:71.8px;width:19.6px;height:20.4px;background:#1e1e20;"></div><div class="bl" style="left:32.7px;top:71.1px;width:13.9px;height:12.1px;background:#232325;"></div><div class="bl" style="left:64.7px;top:70.4px;width:18.4px;height:15.9px;background:#1a1a1c;"></div><div class="bl" style="left:83.9px;top:69.3px;width:18.4px;height:22.3px;background:#2b2b31;"></div><div class="bl" style="left:98.1px;top:53.3px;width:11.4px;height:7.9px;background:#2a8a62;"></div><div class="bl" style="left:102.2px;top:60.9px;width:12.5px;height:11.1px;background:#6a5a8a;opacity:.7"></div><div class="bl" style="left:114.0px;top:35.9px;width:4.9px;height:77.9px;background:#3b3139;"></div><div class="bl" style="left:74.4px;top:87.1px;width:19.5px;height:4.5px;background:#e6e6e2;"></div><div class="bl" style="left:82.1px;top:90.4px;width:18.1px;height:4.2px;background:#6dab5c;"></div><div class="bl" style="left:0.0px;top:91.5px;width:20.2px;height:8.3px;background:#2a2a2c;"></div><div class="bl" style="left:32.0px;top:69.3px;width:36.2px;height:34.8px;background:#4b2f29;border-radius:48% 48% 35% 35%"></div><div class="bl" style="left:39.6px;top:83.2px;width:24.3px;height:22.3px;background:#c9917d;border-radius:40% 40% 48% 48%"></div><div class="bl" style="left:41.3px;top:91.5px;width:20.6px;height:3.1px;background:#3a2626;opacity:.75"></div><div class="bl" style="left:18.8px;top:104.3px;width:61.9px;height:12.2px;background:#a3525f;border-radius:35% 35% 0 0"></div><div class="bl" style="left:38.2px;top:105.4px;width:22.3px;height:11.1px;background:#d34a5a;border-radius:30%"></div></div>
<div style="left:1629.60px;top:539.70px;width:17.00px;height:17.00px;background:rgba(52,54,56,.95);border-radius:50%;filter:blur(.7px);"></div>
<div style="left:1629.10px;top:539.20px;width:18.00px;height:18.00px;"><svg class="a" style="left:3px;top:2.7px" width="12" height="12" viewBox="0 0 24 24"><path fill="#b8bbbe" d="M19 11h-1.700c0 .74-.16 1.430-.430 2.050l1.230 1.230c.56-.98.9-2.090.9-3.280zm-4.020.17c0-.06.02-.11.02-.17V5c0-1.660-1.340-3-3-3S9 3.340 9 5v.18l5.980 5.990zM4.270 3L3 4.270l6.010 6.010V11c0 1.660 1.330 3 2.990 3 .22 0 .44-.03.65-.08l1.660 1.660c-.71.33-1.500.52-2.310.52-2.760 0-5.300-2.100-5.300-5.100H5c0 3.410 2.720 6.230 6 6.720V21h2v-3.280c.91-.13 1.770-.45 2.540-.9L19.730 21 21 19.730 4.270 3z"/></svg></div>
<span class="t" style="left:1541.30px;top:628.77px;font:9.8px/1 'Liberation Sans',sans-serif;color:#fff;letter-spacing:-0.187px;text-shadow:0 0 2px rgba(0,0,0,.55);-webkit-text-stroke:.46px #fff;">Aliona Afanas</span>
<div style="left:1661.50px;top:533.80px;width:118.40px;height:111.70px;background:#e6dccb;border-radius:8.500px;overflow:hidden;"><div style="left:0;top:0;width:119px;height:112px;background:#e6dccb"></div><div class="bl" style="left:0;top:0;width:26px;height:112px;background:linear-gradient(#f3e6cf,#f6ead8 40%,#efe3d0)"></div><div class="bl" style="left:8px;top:20px;width:12px;height:18px;border-radius:40%;background:#fff6e4"></div><div class="bl" style="left:7px;top:34px;width:9px;height:9px;border-radius:40%;background:#c98a78"></div><div style="left:25px;top:0;width:3px;height:112px;background:#f7f0e2"></div><div style="left:59px;top:0;width:3px;height:112px;background:#f7f0e2"></div><div style="left:93px;top:0;width:3px;height:112px;background:#f7f0e2"></div><div style="left:25px;top:21px;width:94px;height:3px;background:#f9f3e6"></div><div style="left:0;top:45px;width:119px;height:3px;background:#f9f3e6"></div><div style="left:25px;top:69px;width:94px;height:3px;background:#f9f3e6"></div><div style="left:0;top:93px;width:119px;height:3px;background:#f9f3e6"></div><div class="bl" style="left:33px;top:5px;width:22px;height:12px;background:#cdbd9c"></div><div class="bl" style="left:72px;top:2px;width:7px;height:19px;border-radius:40%;background:#7c5b49"></div><div class="bl" style="left:80px;top:13px;width:9px;height:8px;border-radius:40%;background:#8a6a54"></div><div class="bl" style="left:84px;top:25px;width:8px;height:20px;background:#2f5a62"></div><div class="bl" style="left:96px;top:24px;width:24px;height:26px;border-radius:45%;background:#3f6a38"></div><div class="bl" style="left:104px;top:50px;width:10px;height:20px;background:#cdb892"></div><div class="bl" style="left:33px;top:53px;width:10px;height:14px;background:#8d8f8c"></div><div class="bl" style="left:96px;top:97px;width:24px;height:16px;background:#a9cbb8"></div><div class="bl" style="left:0;top:88px;width:100px;height:28px;border-radius:40% 30% 0 0;background:#2b2a2a"></div><div class="bl" style="left:30px;top:35px;width:58px;height:74px;border-radius:48% 48% 35% 30%;background:#b38c60"></div><div class="bl" style="left:34px;top:52px;width:31px;height:44px;border-radius:45%;background:#c79677"></div><div class="bl" style="left:34px;top:68px;width:30px;height:3px;background:#6a4e40;opacity:.6"></div></div>
<div style="left:1756.80px;top:539.70px;width:17.00px;height:17.00px;background:rgba(52,54,56,.95);border-radius:50%;filter:blur(.7px);"></div>
<div style="left:1756.30px;top:539.20px;width:18.00px;height:18.00px;"><svg class="a" style="left:3px;top:2.7px" width="12" height="12" viewBox="0 0 24 24"><path fill="#b8bbbe" d="M19 11h-1.700c0 .74-.16 1.430-.430 2.050l1.230 1.230c.56-.98.9-2.090.9-3.280zm-4.020.17c0-.06.02-.11.02-.17V5c0-1.660-1.340-3-3-3S9 3.340 9 5v.18l5.980 5.990zM4.270 3L3 4.270l6.010 6.010V11c0 1.660 1.330 3 2.990 3 .22 0 .44-.03.65-.08l1.660 1.660c-.71.33-1.500.52-2.310.52-2.760 0-5.300-2.100-5.300-5.100H5c0 3.410 2.720 6.230 6 6.720V21h2v-3.280c.91-.13 1.770-.45 2.540-.9L19.730 21 21 19.730 4.270 3z"/></svg></div>
<span class="t" style="left:1668.90px;top:628.77px;font:9.8px/1 'Liberation Sans',sans-serif;color:#fff;letter-spacing:-0.195px;text-shadow:0 0 2px rgba(0,0,0,.55);-webkit-text-stroke:.46px #fff;">Daniela Ciuta</span>
<div style="left:1789.00px;top:533.80px;width:118.50px;height:111.70px;background:linear-gradient(140deg,rgba(0,0,0,.14) 0,rgba(0,0,0,.04) 40%,rgba(0,0,0,0) 60%,rgba(255,255,255,.03) 100%),radial-gradient(ellipse 75% 80% at 50% 52%,#653220 0,#51281a 75%,#422015 125%);border-radius:8.5px;overflow:hidden;"></div>
<div style="left:1829.70px;top:571.10px;width:37.00px;height:37.00px;background:#6a473d;border-radius:50%;"><span class="t" style="left:0;top:0;width:37px;height:37px;line-height:37.5px;text-align:center;font-size:20px;color:#f4ebe8">M</span></div>
<div style="left:1884.40px;top:539.70px;width:17.00px;height:17.00px;background:#74300e;border-radius:50%;filter:blur(.7px);"></div>
<div style="left:1883.90px;top:539.20px;width:18.00px;height:18.00px;"><svg class="a" style="left:3px;top:2.7px" width="12" height="12" viewBox="0 0 24 24"><path fill="#ffbf9f" d="M19 11h-1.700c0 .74-.16 1.430-.430 2.050l1.230 1.230c.56-.98.9-2.090.9-3.280zm-4.020.17c0-.06.02-.11.02-.17V5c0-1.660-1.340-3-3-3S9 3.340 9 5v.18l5.980 5.990zM4.270 3L3 4.270l6.010 6.010V11c0 1.660 1.330 3 2.990 3 .22 0 .44-.03.65-.08l1.660 1.660c-.71.33-1.500.52-2.310.52-2.760 0-5.300-2.100-5.300-5.100H5c0 3.410 2.720 6.230 6 6.720V21h2v-3.280c.91-.13 1.770-.45 2.540-.9L19.730 21 21 19.730 4.270 3z"/></svg></div>
<span class="t" style="left:1796.40px;top:628.77px;font:9.8px/1 'Liberation Sans',sans-serif;color:#fff;letter-spacing:-0.197px;text-shadow:0 0 2px rgba(0,0,0,.55);-webkit-text-stroke:.46px #fff;">Mocanu Liuba</span>
<div style="left:1407.00px;top:654.70px;width:118.10px;height:111.30px;background:linear-gradient(140deg,rgba(0,0,0,.14) 0,rgba(0,0,0,.04) 40%,rgba(0,0,0,0) 60%,rgba(255,255,255,.03) 100%),radial-gradient(ellipse 75% 80% at 50% 52%,#426523 0,#35511c 75%,#2b4217 125%);border-radius:8.5px;overflow:hidden;"></div>
<div style="left:1447.60px;top:692.00px;width:37.00px;height:37.00px;background:#6a9f3a;border-radius:50%;"><span class="t" style="left:0;top:0;width:37px;height:37px;line-height:37.5px;text-align:center;font-size:20px;color:#fff">N</span></div>
<div style="left:1502.00px;top:660.60px;width:17.00px;height:17.00px;background:#28540e;border-radius:50%;filter:blur(.7px);"></div>
<div style="left:1501.50px;top:660.10px;width:18.00px;height:18.00px;"><svg class="a" style="left:3px;top:2.7px" width="12" height="12" viewBox="0 0 24 24"><path fill="#b0e480" d="M19 11h-1.700c0 .74-.16 1.430-.430 2.050l1.230 1.230c.56-.98.9-2.090.9-3.280zm-4.020.17c0-.06.02-.11.02-.17V5c0-1.660-1.340-3-3-3S9 3.340 9 5v.18l5.980 5.990zM4.270 3L3 4.270l6.010 6.010V11c0 1.660 1.330 3 2.990 3 .22 0 .44-.03.65-.08l1.660 1.660c-.71.33-1.500.52-2.310.52-2.760 0-5.300-2.100-5.300-5.100H5c0 3.410 2.720 6.230 6 6.720V21h2v-3.280c.91-.13 1.770-.45 2.540-.9L19.730 21 21 19.730 4.270 3z"/></svg></div>
<span class="t" style="left:1414.40px;top:749.27px;font:9.8px/1 'Liberation Sans',sans-serif;color:#fff;letter-spacing:-0.160px;text-shadow:0 0 2px rgba(0,0,0,.55);-webkit-text-stroke:.46px #fff;">Natalia Scutaru</span>
<div style="left:1533.90px;top:654.70px;width:118.80px;height:111.30px;background:linear-gradient(140deg,rgba(0,0,0,.14) 0,rgba(0,0,0,.04) 40%,rgba(0,0,0,0) 60%,rgba(255,255,255,.03) 100%),radial-gradient(ellipse 75% 80% at 50% 52%,#10616c 0,#0d4d56 75%,#0b3f47 125%);border-radius:8.5px;overflow:hidden;"></div>
<div style="left:1574.80px;top:692.00px;width:37.00px;height:37.00px;background:#1399aa;border-radius:50%;"><span class="t" style="left:0;top:0;width:37px;height:37px;line-height:37.5px;text-align:center;font-size:20px;color:#fff">E</span></div>
<div style="left:1629.60px;top:660.60px;width:17.00px;height:17.00px;background:#094858;border-radius:50%;filter:blur(.7px);"></div>
<div style="left:1629.10px;top:660.10px;width:18.00px;height:18.00px;"><svg class="a" style="left:3px;top:2.7px" width="12" height="12" viewBox="0 0 24 24"><path fill="#8cdcec" d="M19 11h-1.700c0 .74-.16 1.430-.430 2.050l1.230 1.230c.56-.98.9-2.090.9-3.280zm-4.020.17c0-.06.02-.11.02-.17V5c0-1.660-1.340-3-3-3S9 3.340 9 5v.18l5.980 5.990zM4.270 3L3 4.270l6.010 6.010V11c0 1.660 1.330 3 2.990 3 .22 0 .44-.03.65-.08l1.660 1.660c-.71.33-1.500.52-2.310.52-2.760 0-5.300-2.100-5.300-5.100H5c0 3.410 2.720 6.230 6 6.720V21h2v-3.280c.91-.13 1.770-.45 2.540-.9L19.730 21 21 19.730 4.270 3z"/></svg></div>
<span class="t" style="left:1541.30px;top:749.27px;font:9.8px/1 'Liberation Sans',sans-serif;color:#fff;letter-spacing:-0.255px;text-shadow:0 0 2px rgba(0,0,0,.55);-webkit-text-stroke:.46px #fff;">Elena Prutean</span>
<div style="left:1661.50px;top:654.70px;width:118.40px;height:111.30px;background:linear-gradient(140deg,rgba(0,0,0,.14) 0,rgba(0,0,0,.04) 40%,rgba(0,0,0,0) 60%,rgba(255,255,255,.03) 100%),radial-gradient(ellipse 75% 80% at 50% 52%,#694023 0,#54331c 75%,#442a17 125%);border-radius:8.5px;overflow:hidden;"></div>
<div style="left:1702.20px;top:692.00px;width:37.00px;height:37.00px;background:#d0cac6;border-radius:50%;overflow:hidden;"><div class="bl" style="left:9px;top:4px;width:20px;height:17px;border-radius:50%;background:#7a3e24"></div><div class="bl" style="left:12px;top:9px;width:14px;height:15px;border-radius:48%;background:#dcae96"></div><div class="bl" style="left:5px;top:24px;width:27px;height:16px;border-radius:40% 40% 0 0;background:#1e1e22"></div></div>
<div style="left:1756.80px;top:660.60px;width:17.00px;height:17.00px;background:#74300e;border-radius:50%;filter:blur(.7px);"></div>
<div style="left:1756.30px;top:660.10px;width:18.00px;height:18.00px;"><svg class="a" style="left:3px;top:2.7px" width="12" height="12" viewBox="0 0 24 24"><path fill="#ffbf9f" d="M19 11h-1.700c0 .74-.16 1.430-.430 2.050l1.230 1.230c.56-.98.9-2.090.9-3.280zm-4.020.17c0-.06.02-.11.02-.17V5c0-1.660-1.340-3-3-3S9 3.340 9 5v.18l5.980 5.990zM4.270 3L3 4.270l6.010 6.010V11c0 1.660 1.330 3 2.990 3 .22 0 .44-.03.65-.08l1.660 1.660c-.71.33-1.500.52-2.310.52-2.760 0-5.300-2.100-5.300-5.100H5c0 3.410 2.720 6.230 6 6.720V21h2v-3.280c.91-.13 1.770-.45 2.540-.9L19.730 21 21 19.730 4.270 3z"/></svg></div>
<span class="t" style="left:1668.90px;top:749.27px;font:9.8px/1 'Liberation Sans',sans-serif;color:#fff;letter-spacing:-0.167px;text-shadow:0 0 2px rgba(0,0,0,.55);-webkit-text-stroke:.46px #fff;">Anca Mihaela Avram</span>
<div style="left:1789.00px;top:654.70px;width:118.50px;height:111.30px;background:linear-gradient(140deg,rgba(0,0,0,.14) 0,rgba(0,0,0,.04) 40%,rgba(0,0,0,0) 60%,rgba(255,255,255,.03) 100%),radial-gradient(ellipse 75% 80% at 50% 52%,#724664 0,#5c3850 75%,#4b2e42 125%);border-radius:8.5px;overflow:hidden;"></div>
<div style="left:1829.70px;top:692.00px;width:37.00px;height:37.00px;background:radial-gradient(circle at 50% 45%,#f0f0ee 0,#d8dad8 60%,#b8bcb8 100%);border-radius:50%;overflow:hidden;"><div class="bl" style="left:15.500px;top:8px;width:6px;height:6px;border-radius:50%;background:#5a4a40"></div><div class="bl" style="left:14px;top:13px;width:9px;height:17px;border-radius:30%;background:#26282c"></div></div>
<div style="left:1884.40px;top:660.60px;width:17.00px;height:17.00px;background:#7a1662;border-radius:50%;filter:blur(.7px);"></div>
<div style="left:1883.90px;top:660.10px;width:18.00px;height:18.00px;"><svg class="a" style="left:3px;top:2.7px" width="12" height="12" viewBox="0 0 24 24"><path fill="#ffaae0" d="M19 11h-1.700c0 .74-.16 1.430-.430 2.050l1.230 1.230c.56-.98.9-2.090.9-3.280zm-4.020.17c0-.06.02-.11.02-.17V5c0-1.660-1.340-3-3-3S9 3.340 9 5v.18l5.980 5.990zM4.270 3L3 4.270l6.010 6.010V11c0 1.660 1.330 3 2.990 3 .22 0 .44-.03.65-.08l1.660 1.660c-.71.33-1.500.52-2.310.52-2.760 0-5.300-2.100-5.300-5.100H5c0 3.410 2.720 6.230 6 6.720V21h2v-3.280c.91-.13 1.770-.45 2.540-.9L19.730 21 21 19.730 4.270 3z"/></svg></div>
<span class="t" style="left:1796.40px;top:749.27px;font:9.8px/1 'Liberation Sans',sans-serif;color:#fff;letter-spacing:-0.241px;text-shadow:0 0 2px rgba(0,0,0,.55);-webkit-text-stroke:.46px #fff;">Ina Prisăcaru</span>
<div style="left:1454.20px;top:775.30px;width:198.40px;height:111.20px;background:#36373a;border-radius:9px;"></div>
<div style="left:1526.50px;top:808.60px;width:28.80px;height:28.80px;background:radial-gradient(circle at 50% 40%,#c9b48e 0,#a89878 60%,#7a7058 100%);border-radius:50%;overflow:hidden;"><div class="bl" style="left:4px;top:6px;width:11px;height:13px;border-radius:50%;background:#c8a088"></div><div class="bl" style="left:4px;top:3px;width:11px;height:6px;border-radius:50%;background:#55585c"></div><div class="bl" style="left:14px;top:10px;width:12px;height:13px;border-radius:50%;background:#dba48a"></div><div class="bl" style="left:13px;top:7px;width:14px;height:7px;border-radius:50%;background:#c4532c"></div><div class="bl" style="left:2px;top:20px;width:26px;height:10px;background:#3c4658"></div></div>
<div style="left:1553.80px;top:808.60px;width:28.80px;height:28.80px;background:#5d6cc2;border-radius:50%;"><span class="t" style="left:0;top:0;width:28.800px;height:28.800px;line-height:29.200px;text-align:center;font-size:15px;color:#fff">R</span></div>
<span class="t" style="left:1535.60px;top:843.67px;font:9.8px/1 'Liberation Sans',sans-serif;color:#e8eaed;letter-spacing:-0.250px;-webkit-text-stroke:.46px #e8eaed;">Încă 238</span>
<div style="left:1661.20px;top:775.30px;width:199.00px;height:111.70px;background:#cfa57f;border-radius:8.500px;overflow:hidden;"><div style="left:0.0px;top:0.0px;width:199.0px;height:112.4px;background:linear-gradient(90deg,#c7986f 0,#d2a57d 45%,#cfa079 80%,#c4956c 100%);"></div><div class="bl" style="left:0.0px;top:0.0px;width:17.1px;height:112.4px;background:linear-gradient(90deg,#b9aa9a 0,#e0d9cf 45%,#ddd5ca 100%);"></div><div class="bl" style="left:173.7px;top:0.0px;width:25.3px;height:112.4px;background:#d9d4cb;"></div><div class="bl" style="left:7.5px;top:87.8px;width:191.5px;height:26.0px;background:linear-gradient(#c08c5c,#b98352);"></div><div class="bl" style="left:7.5px;top:86.7px;width:191.5px;height:1.6px;background:#d2a274;"></div><div class="bl" style="left:15.0px;top:70.7px;width:16.4px;height:16.0px;background:#1b4bb2;border-radius:8% 8% 25% 25%"></div><div class="bl" style="left:22.8px;top:35.8px;width:1.1px;height:35.6px;background:#4d7a3c;"></div><div class="bl" style="left:19.2px;top:24.2px;width:5.5px;height:13.7px;background:#2f6a26;border-radius:50%;transform:rotate(5deg)"></div><div class="bl" style="left:43.9px;top:30.4px;width:5.2px;height:15.0px;background:#2f6a26;border-radius:50%;transform:rotate(-32deg)"></div><div class="bl" style="left:39.4px;top:44.0px;width:4.7px;height:12.3px;background:#2f6a26;border-radius:50%;transform:rotate(-25deg)"></div><div class="bl" style="left:7.5px;top:40.5px;width:16.4px;height:4.9px;background:#2f6a26;border-radius:50%;transform:rotate(-8deg)"></div><div class="bl" style="left:25.7px;top:48.2px;width:4.7px;height:10.9px;background:#2f6a26;border-radius:50%;transform:rotate(20deg)"></div><div class="bl" style="left:20.8px;top:55.7px;width:4.9px;height:9.6px;background:#2f6a26;border-radius:50%;transform:rotate(0deg)"></div><div class="bl" style="left:27.4px;top:43.4px;width:12.3px;height:4.1px;background:#3f7a32;border-radius:50%;transform:rotate(-30deg)"></div><div class="bl" style="left:36.3px;top:82.4px;width:16.4px;height:4.9px;background:#2d2b22;border-radius:30%"></div><div class="bl" style="left:151.2px;top:65.9px;width:10.9px;height:20.8px;background:#5b4a40;"></div><div class="bl" style="left:162.8px;top:71.4px;width:13.0px;height:15.3px;background:#8d8c88;"></div><div class="bl" style="left:158.0px;top:11.2px;width:41.0px;height:101.2px;background:#2c5c24;border-radius:35% 0 0 20%"></div><div class="bl" style="left:149.8px;top:35.8px;width:21.9px;height:23.3px;background:#2a5a22;border-radius:50%"></div><div class="bl" style="left:170.3px;top:19.4px;width:23.3px;height:20.5px;background:#4c8c3a;border-radius:45%"></div><div class="bl" style="left:175.8px;top:52.3px;width:20.5px;height:19.2px;background:#3f7d30;border-radius:45%"></div><div class="bl" style="left:163.5px;top:76.9px;width:21.9px;height:21.9px;background:#23501c;border-radius:45%"></div><div class="bl" style="left:185.4px;top:82.4px;width:13.7px;height:21.9px;background:#478636;border-radius:45%"></div><div class="bl" style="left:175.8px;top:39.9px;width:12.3px;height:12.3px;background:#d8d4c6;border-radius:45%;opacity:.55"></div><div class="bl" style="left:30.1px;top:74.8px;width:122.4px;height:43.1px;background:#b3a99b;border-radius:38% 30% 0 0"></div><div class="bl" style="left:51.3px;top:78.2px;width:30.1px;height:20.5px;background:#c2b9ac;border-radius:45%"></div><div class="bl" style="left:78.7px;top:15.3px;width:71.8px;height:99.9px;background:#4a3a31;border-radius:46% 46% 22% 22%"></div><div class="bl" style="left:99.2px;top:31.7px;width:47.2px;height:62.9px;background:#caa28d;border-radius:40% 42% 48% 48%"></div><div class="bl" style="left:111.5px;top:27.6px;width:27.4px;height:12.3px;background:#4f3e34;border-radius:50%;transform:rotate(8deg)"></div><div class="bl" style="left:100.5px;top:50.2px;width:23.3px;height:13.7px;background:transparent;border-radius:35%;border:2px solid #2c2837"></div><div class="bl" style="left:128.6px;top:50.9px;width:18.5px;height:14.4px;background:transparent;border-radius:35%;border:2px solid #2c2837"></div><div class="bl" style="left:103.3px;top:52.3px;width:19.2px;height:10.3px;background:#8d8fb8;border-radius:35%;opacity:.35"></div><div class="bl" style="left:130.6px;top:52.9px;width:15.0px;height:10.9px;background:#8d8fb8;border-radius:35%;opacity:.35"></div><div class="bl" style="left:112.9px;top:75.5px;width:16.4px;height:3.0px;background:#a87868;border-radius:50%;opacity:.7"></div><div class="bl" style="left:78.7px;top:53.6px;width:23.3px;height:58.8px;background:#4a3a31;border-radius:40%"></div><div class="bl" style="left:136.1px;top:71.4px;width:15.0px;height:41.0px;background:#46372f;border-radius:40%"></div><div class="bl" style="left:103.3px;top:96.0px;width:27.4px;height:19.2px;background:#9a907f;border-radius:30%"></div></div>
<div style="left:1836.70px;top:782.10px;width:17.00px;height:17.00px;background:rgba(52,54,56,.85);border-radius:50%;filter:blur(.7px);"></div>
<div style="left:1836.20px;top:781.60px;width:18.00px;height:18.00px;"><svg class="a" style="left:3px;top:2.7px" width="12" height="12" viewBox="0 0 24 24"><path fill="#b8bbbe" d="M19 11h-1.700c0 .74-.16 1.430-.430 2.050l1.230 1.230c.56-.98.9-2.090.9-3.280zm-4.020.17c0-.06.02-.11.02-.17V5c0-1.660-1.340-3-3-3S9 3.340 9 5v.18l5.980 5.990zM4.270 3L3 4.270l6.010 6.010V11c0 1.660 1.330 3 2.990 3 .22 0 .44-.03.65-.08l1.660 1.660c-.71.33-1.500.52-2.310.52-2.760 0-5.300-2.100-5.300-5.100H5c0 3.410 2.720 6.230 6 6.720V21h2v-3.280c.91-.13 1.770-.45 2.540-.9L19.730 21 21 19.730 4.270 3z"/></svg></div>
<span class="t" style="left:1668.50px;top:869.77px;font:9.8px/1 'Liberation Sans',sans-serif;color:#fff;letter-spacing:-0.228px;text-shadow:0 0 2px rgba(0,0,0,.55);-webkit-text-stroke:.46px #fff;">Nina Garstea</span>
<svg class="a" style="left:1842.40px;top:870.80px;" width="11" height="9" viewBox="0 0 11 9"><rect x="0" y="0" width="11" height="9" rx="2" fill="#f4f4f4"/><path d="M2 7l2.500-3.800h4.500l-1.500 3.800z" fill="#3a3a3a"/></svg>
<div style="left:4.60px;top:93.50px;width:1388.30px;height:750.90px;background:#000;border-radius:7px;"></div>
<div style="left:9.50px;top:99.80px;width:1378.30px;height:739.10px;background:#e7e7e7;overflow:hidden;"></div>
<div style="left:9.50px;top:99.80px;width:1378.30px;height:58.00px;background:#c55527;overflow:hidden;"><div class="bl" style="left:950px;top:-8px;width:170px;height:34px;border-radius:50%;background:rgba(150,60,25,.28);transform:rotate(-4deg)"></div><div class="bl" style="left:1060px;top:22px;width:240px;height:28px;border-radius:50%;background:rgba(150,60,25,.30);transform:rotate(3deg)"></div><div class="bl" style="left:1190px;top:-10px;width:170px;height:30px;border-radius:50%;background:rgba(150,60,25,.26);transform:rotate(6deg)"></div></div>
<svg class="a" style="left:28.00px;top:109.00px;" width="13" height="13" viewBox="0 0 13 13"><path d="M1 1h9.500L12 2.500V12H1z" fill="none" stroke="#fff" stroke-width="1.400"/><rect x="3.300" y="1.500" width="6" height="3.600" fill="#fff"/><rect x="3.600" y="7.600" width="5.800" height="4" fill="#fff"/></svg>
<svg class="a" style="left:53.00px;top:108.00px;" width="15" height="13" viewBox="0 0 15 13"><path d="M2 5.500h7a4 4 0 0 1 0 7.200h-2" fill="none" stroke="#fff" stroke-width="1.900"/><path d="M5.500 1.500L1.500 5.500l4 4" fill="none" stroke="#fff" stroke-width="1.900"/></svg>
<svg class="a" style="left:72.00px;top:111.50px;" width="7" height="5" viewBox="0 0 7 5"><path d="M1 1l2.500 2.500L6 1" fill="none" stroke="#fff" stroke-width="1.200"/></svg>
<svg class="a" style="left:88.00px;top:107.50px;" width="13" height="14" viewBox="0 0 13 14"><path d="M9.500 3.500a5 5 0 1 1-5.500.3" fill="none" stroke="#f08a5c" stroke-width="1.800"/><path d="M6.500 0.500v4.500h4" fill="none" stroke="#f08a5c" stroke-width="1.600"/></svg>
<svg class="a" style="left:112.00px;top:107.50px;" width="15" height="15" viewBox="0 0 15 15"><path d="M0.500 1.500h13M1.500 1.500v7.500h11v-7.500" fill="none" stroke="#fff" stroke-width="1.300"/><path d="M7 9v3M4 13.500h6" stroke="#fff" stroke-width="1.300"/><circle cx="7.500" cy="5.500" r="2.300" fill="none" stroke="#fff" stroke-width="1.100"/></svg>
<div style="left:142.50px;top:112.30px;width:3.00px;height:1.20px;background:#fff;"></div>
<svg class="a" style="left:141.80px;top:114.50px;" width="5" height="3" viewBox="0 0 5 3"><path d="M0.500 0.500l2 2 2-2z" fill="#fff"/></svg>
<span class="t" style="left:601.50px;top:110.25px;font:11px/1 'Liberation Sans',sans-serif;color:#fff;letter-spacing:-0.243px;">Dimensiunea personală (1)  -  PowerPoint</span>
<span class="t" style="left:1116.50px;top:110.25px;font:11px/1 'Liberation Sans',sans-serif;color:#fff;letter-spacing:-0.358px;">Angela Casian</span>
<div style="left:1192.00px;top:104.30px;width:21.00px;height:21.00px;background:#c6c6c6;overflow:hidden;"><div style="left:6.500px;top:3px;width:8px;height:8px;border-radius:50%;background:#fff"></div><div style="left:2.500px;top:11.500px;width:16px;height:14px;border-radius:45% 45% 0 0;background:#fff"></div></div>
<svg class="a" style="left:1237.00px;top:108.50px;" width="13" height="11" viewBox="0 0 13 11"><rect x="0.600" y="0.600" width="11.800" height="9.800" fill="none" stroke="#fff" stroke-width="1.200"/><path d="M0.600 3.300h11.800" stroke="#fff" stroke-width="1.200"/><path d="M6.500 8.800V5M4.800 6.500l1.700-1.700 1.700 1.700" fill="none" stroke="#fff" stroke-width="1.100"/></svg>
<div style="left:1280.00px;top:112.60px;width:10.00px;height:1.30px;background:#fff;"></div>
<svg class="a" style="left:1320.50px;top:107.50px;" width="11" height="11" viewBox="0 0 11 11"><rect x="0.600" y="2.800" width="7.600" height="7.600" rx="1.500" fill="none" stroke="#fff" stroke-width="1.200"/><path d="M2.800 2.800V2.100a1.500 1.500 0 0 1 1.500-1.500h4.600a1.500 1.500 0 0 1 1.500 1.500v4.600a1.500 1.500 0 0 1-1.500 1.500h-.7" fill="none" stroke="#fff" stroke-width="1.200"/></svg>
<svg class="a" style="left:1361.50px;top:108.00px;" width="11" height="11" viewBox="0 0 11 11"><path d="M0.800 0.800l9.400 9.400M10.200 0.800L0.800 10.200" stroke="#fff" stroke-width="1.300"/></svg>
<svg class="a" style="left:1359.50px;top:137.50px;" width="15" height="13" viewBox="0 0 15 13"><path d="M1 1h12.500v8h-8l-3 3v-3H1z" fill="none" stroke="#fff" stroke-width="1.300"/></svg>
<div style="left:63.80px;top:130.30px;width:51.00px;height:28.50px;background:#f3f3f3;"></div>
<span class="t" style="left:24.00px;top:139.25px;font:11px/1 'Liberation Sans',sans-serif;color:#fff;letter-spacing:-0.481px;">Fișier</span>
<span class="t" style="left:72.80px;top:139.25px;font:11px/1 'Liberation Sans',sans-serif;color:#c4532a;letter-spacing:-0.380px;">Pornire</span>
<span class="t" style="left:125.00px;top:139.25px;font:11px/1 'Liberation Sans',sans-serif;color:#fff;letter-spacing:0.068px;">Меню</span>
<span class="t" style="left:174.40px;top:139.25px;font:11px/1 'Liberation Sans',sans-serif;color:#fff;letter-spacing:-0.344px;">Inserare</span>
<span class="t" style="left:231.60px;top:139.25px;font:11px/1 'Liberation Sans',sans-serif;color:#fff;letter-spacing:-0.223px;">Proiectare</span>
<span class="t" style="left:299.00px;top:139.25px;font:11px/1 'Liberation Sans',sans-serif;color:#fff;letter-spacing:-0.144px;">Tranziții</span>
<span class="t" style="left:355.50px;top:139.25px;font:11px/1 'Liberation Sans',sans-serif;color:#fff;letter-spacing:0.235px;">Animații</span>
<span class="t" style="left:415.00px;top:139.25px;font:11px/1 'Liberation Sans',sans-serif;color:#fff;letter-spacing:-0.081px;">Expunere diapozitive</span>
<span class="t" style="left:534.00px;top:139.25px;font:11px/1 'Liberation Sans',sans-serif;color:#fff;letter-spacing:-0.136px;">Înregistrare</span>
<span class="t" style="left:607.50px;top:139.25px;font:11px/1 'Liberation Sans',sans-serif;color:#fff;letter-spacing:-0.316px;">Revizuire</span>
<span class="t" style="left:669.50px;top:139.25px;font:11px/1 'Liberation Sans',sans-serif;color:#fff;letter-spacing:-0.146px;">Vizualizare</span>
<span class="t" style="left:740.50px;top:139.25px;font:11px/1 'Liberation Sans',sans-serif;color:#fff;letter-spacing:0.211px;">Ajutor</span>
<span class="t" style="left:816.80px;top:139.25px;font:11px/1 'Liberation Sans',sans-serif;color:#fff;letter-spacing:-0.147px;">Spune-mi ce dorești să faci</span>
<svg class="a" style="left:793.50px;top:136.50px;" width="11" height="16" viewBox="0 0 11 16"><path d="M5.500 1a4.300 4.300 0 0 0-2.500 7.800v2h5v-2A4.300 4.300 0 0 0 5.500 1z" fill="none" stroke="#fff" stroke-width="1.200"/><path d="M3.400 12.600h4.200M4 14.600h3" stroke="#fff" stroke-width="1.200"/></svg>
<div style="left:9.50px;top:157.80px;width:1378.30px;height:81.40px;background:#f3f3f3;"></div>
<div style="left:9.50px;top:239.20px;width:1378.30px;height:1.00px;background:#d9d9d9;"></div>
<div style="left:95.50px;top:161.60px;width:1.00px;height:74.50px;background:#c9c9c9;"></div>
<div style="left:250.30px;top:161.60px;width:1.00px;height:74.50px;background:#c9c9c9;"></div>
<div style="left:480.40px;top:161.60px;width:1.00px;height:74.50px;background:#c9c9c9;"></div>
<div style="left:789.40px;top:161.60px;width:1.00px;height:74.50px;background:#c9c9c9;"></div>
<div style="left:1122.60px;top:161.60px;width:1.00px;height:74.50px;background:#c9c9c9;"></div>
<div style="left:1218.40px;top:161.60px;width:1.00px;height:74.50px;background:#c9c9c9;"></div>
<div style="left:1329.30px;top:161.60px;width:1.00px;height:74.50px;background:#c9c9c9;"></div>
<span class="t" style="left:24.00px;top:227.60px;font:10px/1 'Liberation Sans',sans-serif;color:#555;letter-spacing:-0.145px;">Clipboard</span>
<span class="t" style="left:149.50px;top:227.60px;font:10px/1 'Liberation Sans',sans-serif;color:#555;letter-spacing:-0.265px;">Diapozitive</span>
<span class="t" style="left:348.40px;top:227.60px;font:10px/1 'Liberation Sans',sans-serif;color:#555;letter-spacing:-0.602px;">Font</span>
<span class="t" style="left:609.80px;top:227.60px;font:10px/1 'Liberation Sans',sans-serif;color:#555;letter-spacing:-0.394px;">Paragraf</span>
<span class="t" style="left:935.70px;top:227.60px;font:10px/1 'Liberation Sans',sans-serif;color:#555;letter-spacing:-0.681px;">Desen</span>
<span class="t" style="left:1155.00px;top:227.60px;font:10px/1 'Liberation Sans',sans-serif;color:#555;letter-spacing:-0.384px;">Editare</span>
<span class="t" style="left:1221.00px;top:227.60px;font:10px/1 'Liberation Sans',sans-serif;color:#555;letter-spacing:-0.230px;">Programe de completare</span>
<svg class="a" style="left:84.50px;top:229.50px;" width="8" height="8" viewBox="0 0 8 8"><path d="M0.500 6V0.500H6" fill="none" stroke="#999" stroke-width="1"/><path d="M3 3l4 4M7 4v3H4" fill="none" stroke="#999" stroke-width="1"/></svg>
<svg class="a" style="left:468.50px;top:229.50px;" width="8" height="8" viewBox="0 0 8 8"><path d="M0.500 6V0.500H6" fill="none" stroke="#999" stroke-width="1"/><path d="M3 3l4 4M7 4v3H4" fill="none" stroke="#999" stroke-width="1"/></svg>
<svg class="a" style="left:778.50px;top:229.50px;" width="8" height="8" viewBox="0 0 8 8"><path d="M0.500 6V0.500H6" fill="none" stroke="#999" stroke-width="1"/><path d="M3 3l4 4M7 4v3H4" fill="none" stroke="#999" stroke-width="1"/></svg>
<svg class="a" style="left:1111.50px;top:229.50px;" width="8" height="8" viewBox="0 0 8 8"><path d="M0.500 6V0.500H6" fill="none" stroke="#999" stroke-width="1"/><path d="M3 3l4 4M7 4v3H4" fill="none" stroke="#999" stroke-width="1"/></svg>
<div style="left:24.50px;top:166.50px;width:15.00px;height:19.00px;background:#d2d2d2;border-radius:1px;"></div>
<div style="left:29.00px;top:164.60px;width:6.00px;height:3.50px;background:#c6c6c6;border-radius:1px;"></div>
<div style="left:33.50px;top:176.00px;width:9.50px;height:13.50px;background:#efefef;border:1px solid #d4d4d4;"></div>
<span class="t" style="left:21.80px;top:194.45px;font:11px/1 'Liberation Sans',sans-serif;color:#b9b9b9;letter-spacing:-0.034px;">Lipire</span>
<svg class="a" style="left:31.50px;top:210.50px;" width="6" height="4" viewBox="0 0 6 4"><path d="M0.500 0.500l2.500 2.500L5.500 0.500" fill="none" stroke="#c4c4c4" stroke-width="1"/></svg>
<svg class="a" style="left:57.50px;top:163.50px;" width="12" height="14" viewBox="0 0 12 14"><path d="M2 0.500l6.500 9M10 0.500l-6.500 9" stroke="#555" stroke-width="1.200" fill="none"/><circle cx="2.800" cy="11" r="2" fill="none" stroke="#3b79c4" stroke-width="1.300"/><circle cx="9.200" cy="11" r="2" fill="none" stroke="#3b79c4" stroke-width="1.300"/></svg>
<svg class="a" style="left:57.00px;top:184.00px;" width="13" height="14" viewBox="0 0 13 14"><rect x="0.600" y="0.600" width="7" height="9" fill="#fff" stroke="#777" stroke-width="1"/><rect x="4.800" y="4" width="7" height="9" fill="#dbe6f3" stroke="#6d8db4" stroke-width="1"/></svg>
<svg class="a" style="left:77.50px;top:189.00px;" width="6" height="4" viewBox="0 0 6 4"><path d="M0.500 0.500l2.500 2.500L5.500 0.500" fill="none" stroke="#555" stroke-width="1.200"/></svg>
<svg class="a" style="left:58.00px;top:206.00px;" width="13" height="13" viewBox="0 0 13 13"><path d="M9.500 1.500l2 2-3.500 3.500-2-2z" fill="#555"/><path d="M6 5l2 2-1 1-2-2z" fill="#888"/><path d="M5 6l2 2-4 3.500-1.500-1.500z" fill="#e8a33d"/></svg>
<svg class="a" style="left:114.50px;top:163.50px;" width="28" height="26" viewBox="0 0 28 26"><rect x="3.500" y="4.500" width="22" height="17" rx="1" fill="#fff" stroke="#888" stroke-width="1.100"/><rect x="6" y="8" width="17" height="4" fill="#cfcfcf"/><rect x="7" y="14.500" width="15" height="1.200" fill="#d8d8d8"/><rect x="7" y="17.300" width="15" height="1.200" fill="#d8d8d8"/><path d="M4 0.500v7M0.500 4h7M1.500 1.500l5 5M6.500 1.500l-5 5" stroke="#f0a030" stroke-width="1.100"/></svg>
<span class="t" style="left:104.00px;top:195.65px;font:11px/1 'Liberation Sans',sans-serif;color:#444;letter-spacing:0.152px;">Diapozitiv</span>
<span class="t" style="left:115.00px;top:209.85px;font:11px/1 'Liberation Sans',sans-serif;color:#444;letter-spacing:-0.284px;">nou</span>
<svg class="a" style="left:136.50px;top:211.50px;" width="6" height="4" viewBox="0 0 6 4"><path d="M0.500 0.500l2.500 2.500L5.500 0.500" fill="none" stroke="#444" stroke-width="1.200"/></svg>
<svg class="a" style="left:157.50px;top:163.50px;" width="15" height="13" viewBox="0 0 15 13"><rect x="0.600" y="0.600" width="13.500" height="11.500" fill="#fff" stroke="#888" stroke-width="1"/><rect x="2.300" y="2.300" width="10" height="2.600" fill="#c8c8c8"/><rect x="2.300" y="6.200" width="4.300" height="4.200" fill="#c8c8c8"/><rect x="7.800" y="6.200" width="4.600" height="4.200" fill="#dcdcdc"/></svg>
<span class="t" style="left:175.20px;top:165.85px;font:11px/1 'Liberation Sans',sans-serif;color:#444;letter-spacing:-0.221px;">Aspect</span>
<svg class="a" style="left:210.50px;top:167.50px;" width="6" height="4" viewBox="0 0 6 4"><path d="M0.500 0.500l2.500 2.500L5.500 0.500" fill="none" stroke="#444" stroke-width="1.200"/></svg>
<svg class="a" style="left:157.50px;top:184.00px;" width="15" height="13" viewBox="0 0 15 13"><rect x="3.600" y="2.600" width="10.800" height="9.800" fill="#fff" stroke="#888" stroke-width="1"/><rect x="8" y="4.500" width="5" height="2.500" fill="#d0d0d0"/><path d="M1 5.500a3.500 3.500 0 0 1 6-2" fill="none" stroke="#2a6cb8" stroke-width="1.500"/><path d="M0.300 2.300v3.600h3.400z" fill="#2a6cb8"/></svg>
<span class="t" style="left:175.20px;top:186.65px;font:11px/1 'Liberation Sans',sans-serif;color:#444;letter-spacing:-0.084px;">Reinițializare</span>
<svg class="a" style="left:158.50px;top:205.00px;" width="14" height="14" viewBox="0 0 14 14"><rect x="3.500" y="4.500" width="9.800" height="8.800" fill="#fff" stroke="#888" stroke-width="1"/><rect x="5" y="6.500" width="7" height="1.700" fill="#cfcfcf"/><rect x="0.500" y="1" width="9" height="2.200" fill="#f0b860" stroke="#d09030" stroke-width=".6"/></svg>
<span class="t" style="left:175.20px;top:207.45px;font:11px/1 'Liberation Sans',sans-serif;color:#444;letter-spacing:-0.376px;">Secțiune</span>
<svg class="a" style="left:218.00px;top:209.00px;" width="6" height="4" viewBox="0 0 6 4"><path d="M0.500 0.500l2.500 2.500L5.500 0.500" fill="none" stroke="#444" stroke-width="1.200"/></svg>
<div style="left:257.80px;top:167.30px;width:103.00px;height:20.30px;background:#e2e2e2;border:1px solid #cfcfcf;"></div>
<div style="left:349.50px;top:167.30px;width:1.00px;height:20.30px;background:#cfcfcf;"></div>
<div style="left:362.80px;top:167.30px;width:40.80px;height:20.30px;background:#e2e2e2;border:1px solid #cfcfcf;"></div>
<div style="left:391.20px;top:167.30px;width:1.00px;height:20.30px;background:#cfcfcf;"></div>
<span class="t" style="left:366.00px;top:173.47px;font:10.5px/1 'Liberation Sans',sans-serif;color:#b8b8b8;letter-spacing:-0.090px;">18</span>
<div style="left:353.80px;top:177.00px;width:3.20px;height:1.00px;background:#bdbdbd;"></div>
<div style="left:395.60px;top:177.00px;width:3.20px;height:1.00px;background:#bdbdbd;"></div>
<span class="t" style="left:411.50px;top:172.68px;font:12.5px/1 'Liberation Sans',sans-serif;color:#b3b3b3;">A</span>
<span class="t" style="left:420.00px;top:169.35px;font:7px/1 'Liberation Sans',sans-serif;color:#b3b3b3;">^</span>
<span class="t" style="left:432.50px;top:173.53px;font:11.5px/1 'Liberation Sans',sans-serif;color:#b3b3b3;">A</span>
<span class="t" style="left:440.50px;top:169.35px;font:7px/1 'Liberation Sans',sans-serif;color:#b3b3b3;">ˇ</span>
<div style="left:449.50px;top:168.00px;width:1.00px;height:19.00px;background:#dcdcdc;"></div>
<span class="t" style="left:457.50px;top:171.03px;font:11.5px/1 'Liberation Sans',sans-serif;color:#b3b3b3;">A</span>
<svg class="a" style="left:462.50px;top:174.00px;" width="9" height="9" viewBox="0 0 9 9"><path d="M1 6l4-5 3.500 3-4 5z" fill="#bdbdbd"/></svg>
<span class="t" style="left:263.50px;top:200.72px;font:bold 11.5px/1 'Liberation Sans',sans-serif;color:#b3b3b3;">B</span>
<span class="t" style="left:287.50px;top:200.85px;font:italic bold 11.5px/1 'Liberation Serif',serif;color:#b3b3b3;">I</span>
<span class="t" style="left:306.80px;top:200.72px;font:11.5px/1 'Liberation Sans',sans-serif;color:#b3b3b3;border-bottom:1px solid #b3b3b3;padding-bottom:0.500px;">U</span>
<span class="t" style="left:329.00px;top:200.72px;font:bold 11.5px/1 'Liberation Sans',sans-serif;color:#b3b3b3;text-shadow:0.700px 0.700px 0 #d4d4d4;">S</span>
<span class="t" style="left:346.50px;top:202.35px;font:9px/1 'Liberation Sans',sans-serif;color:#b3b3b3;text-decoration:line-through;">abc</span>
<span class="t" style="left:369.00px;top:200.50px;font:10px/1 'Liberation Sans',sans-serif;color:#b3b3b3;">AV</span>
<div style="left:369.50px;top:210.70px;width:12.00px;height:1.00px;background:#b3b3b3;"></div>
<svg class="a" style="left:387.50px;top:204.00px;" width="6" height="4" viewBox="0 0 6 4"><path d="M0.500 0.500l2.500 2.500L5.500 0.500" fill="none" stroke="#bbb" stroke-width="1"/></svg>
<span class="t" style="left:403.80px;top:201.57px;font:10.5px/1 'Liberation Sans',sans-serif;color:#b3b3b3;">Aa</span>
<svg class="a" style="left:421.50px;top:204.00px;" width="6" height="4" viewBox="0 0 6 4"><path d="M0.500 0.500l2.500 2.500L5.500 0.500" fill="none" stroke="#bbb" stroke-width="1"/></svg>
<div style="left:436.00px;top:197.00px;width:1.00px;height:18.00px;background:#dcdcdc;"></div>
<span class="t" style="left:444.50px;top:198.95px;font:13px/1 'Liberation Sans',sans-serif;color:#b3b3b3;">A</span>
<svg class="a" style="left:462.50px;top:204.00px;" width="6" height="4" viewBox="0 0 6 4"><path d="M0.500 0.500l2.500 2.500L5.500 0.500" fill="none" stroke="#bbb" stroke-width="1"/></svg>
<svg class="a" style="left:491.00px;top:170.50px;" width="14" height="14" viewBox="0 0 14 14"><rect x="0" y="1.0" width="1.800" height="1.800" fill="#bdbdbd"/><rect x="4" y="1.3" width="9" height="1.100" fill="#bdbdbd"/><rect x="0" y="5.5" width="1.800" height="1.800" fill="#bdbdbd"/><rect x="4" y="5.8" width="9" height="1.100" fill="#bdbdbd"/><rect x="0" y="10.0" width="1.800" height="1.800" fill="#bdbdbd"/><rect x="4" y="10.3" width="9" height="1.100" fill="#bdbdbd"/></svg>
<svg class="a" style="left:510.50px;top:176.00px;" width="6" height="4" viewBox="0 0 6 4"><path d="M0.500 0.500l2.500 2.500L5.500 0.500" fill="none" stroke="#bbb" stroke-width="1"/></svg>
<svg class="a" style="left:526.00px;top:170.50px;" width="14" height="14" viewBox="0 0 14 14"><rect x="0.300" y="0.5" width="1.200" height="2.600" fill="#bdbdbd"/><rect x="4" y="1.3" width="9" height="1.100" fill="#bdbdbd"/><rect x="0.300" y="5.0" width="1.200" height="2.600" fill="#bdbdbd"/><rect x="4" y="5.8" width="9" height="1.100" fill="#bdbdbd"/><rect x="0.300" y="9.5" width="1.200" height="2.600" fill="#bdbdbd"/><rect x="4" y="10.3" width="9" height="1.100" fill="#bdbdbd"/></svg>
<svg class="a" style="left:545.50px;top:176.00px;" width="6" height="4" viewBox="0 0 6 4"><path d="M0.500 0.500l2.500 2.500L5.500 0.500" fill="none" stroke="#bbb" stroke-width="1"/></svg>
<div style="left:558.70px;top:168.00px;width:1.00px;height:19.00px;background:#dcdcdc;"></div>
<svg class="a" style="left:566.00px;top:170.50px;" width="14" height="14" viewBox="0 0 14 14"><rect x="0" y="0.300" width="13" height="1.100" fill="#bdbdbd"/><rect x="0" y="11.300" width="13" height="1.100" fill="#bdbdbd"/><rect x="6" y="3.2" width="7" height="1.100" fill="#bdbdbd"/><rect x="6" y="5.9" width="7" height="1.100" fill="#bdbdbd"/><rect x="6" y="8.600000000000001" width="7" height="1.100" fill="#bdbdbd"/><path d="M5 6.500H0.800M2.800 4.500l-2 2 2 2" stroke="#aaa" stroke-width="1.100" fill="none"/></svg>
<svg class="a" style="left:588.50px;top:170.50px;" width="14" height="14" viewBox="0 0 14 14"><rect x="0" y="0.300" width="13" height="1.100" fill="#bdbdbd"/><rect x="0" y="11.300" width="13" height="1.100" fill="#bdbdbd"/><rect x="6" y="3.2" width="7" height="1.100" fill="#bdbdbd"/><rect x="6" y="5.9" width="7" height="1.100" fill="#bdbdbd"/><rect x="6" y="8.600000000000001" width="7" height="1.100" fill="#bdbdbd"/><path d="M0.500 6.500H4.700M2.700 4.500l2 2-2 2" stroke="#aaa" stroke-width="1.100" fill="none"/></svg>
<div style="left:607.50px;top:168.00px;width:1.00px;height:19.00px;background:#dcdcdc;"></div>
<svg class="a" style="left:614.50px;top:170.50px;" width="14" height="14" viewBox="0 0 14 14"><rect x="5" y="1.0" width="8" height="1.100" fill="#bdbdbd"/><rect x="5" y="4.3" width="8" height="1.100" fill="#bdbdbd"/><rect x="5" y="7.6" width="8" height="1.100" fill="#bdbdbd"/><rect x="5" y="10.899999999999999" width="8" height="1.100" fill="#bdbdbd"/><path d="M2 0.500v12M0.300 2.500l1.700-2 1.700 2M0.300 10.500l1.700 2 1.700-2" stroke="#aaa" stroke-width="1" fill="none"/></svg>
<svg class="a" style="left:632.00px;top:176.00px;" width="6" height="4" viewBox="0 0 6 4"><path d="M0.500 0.500l2.500 2.500L5.500 0.500" fill="none" stroke="#bbb" stroke-width="1"/></svg>
<svg class="a" style="left:490.50px;top:199.50px;" width="14" height="14" viewBox="0 0 14 14"><rect x="1" y="0.5" width="11" height="1.100" fill="#bdbdbd"/><rect x="1" y="3.5" width="8" height="1.100" fill="#bdbdbd"/><rect x="1" y="6.5" width="11" height="1.100" fill="#bdbdbd"/><rect x="1" y="9.5" width="7" height="1.100" fill="#bdbdbd"/></svg>
<svg class="a" style="left:512.00px;top:199.50px;" width="14" height="14" viewBox="0 0 14 14"><rect x="1.0" y="0.5" width="11" height="1.100" fill="#bdbdbd"/><rect x="3.0" y="3.5" width="7" height="1.100" fill="#bdbdbd"/><rect x="1.0" y="6.5" width="11" height="1.100" fill="#bdbdbd"/><rect x="3.5" y="9.5" width="6" height="1.100" fill="#bdbdbd"/></svg>
<svg class="a" style="left:534.00px;top:199.50px;" width="14" height="14" viewBox="0 0 14 14"><rect x="1" y="0.5" width="11" height="1.100" fill="#bdbdbd"/><rect x="4" y="3.5" width="8" height="1.100" fill="#bdbdbd"/><rect x="1" y="6.5" width="11" height="1.100" fill="#bdbdbd"/><rect x="5" y="9.5" width="7" height="1.100" fill="#bdbdbd"/></svg>
<svg class="a" style="left:556.00px;top:199.50px;" width="14" height="14" viewBox="0 0 14 14"><rect x="1" y="0.5" width="11" height="1.100" fill="#bdbdbd"/><rect x="1" y="3.5" width="11" height="1.100" fill="#bdbdbd"/><rect x="1" y="6.5" width="11" height="1.100" fill="#bdbdbd"/><rect x="1" y="9.5" width="11" height="1.100" fill="#bdbdbd"/></svg>
<div style="left:575.50px;top:197.00px;width:1.00px;height:18.00px;background:#dcdcdc;"></div>
<svg class="a" style="left:582.00px;top:199.50px;" width="14" height="14" viewBox="0 0 14 14"><rect x="0.500" y="0.5" width="5" height="1.100" fill="#bdbdbd"/><rect x="7" y="0.5" width="5" height="1.100" fill="#bdbdbd"/><rect x="0.500" y="3.5" width="5" height="1.100" fill="#bdbdbd"/><rect x="7" y="3.5" width="5" height="1.100" fill="#bdbdbd"/><rect x="0.500" y="6.5" width="5" height="1.100" fill="#bdbdbd"/><rect x="7" y="6.5" width="5" height="1.100" fill="#bdbdbd"/><rect x="0.500" y="9.5" width="5" height="1.100" fill="#bdbdbd"/><rect x="7" y="9.5" width="5" height="1.100" fill="#bdbdbd"/></svg>
<svg class="a" style="left:600.00px;top:204.00px;" width="6" height="4" viewBox="0 0 6 4"><path d="M0.500 0.500l2.500 2.500L5.500 0.500" fill="none" stroke="#bbb" stroke-width="1"/></svg>
<svg class="a" style="left:648.00px;top:163.50px;" width="13" height="14" viewBox="0 0 13 14"><path d="M1 2v11M4 2v11M7 5v8" stroke="#bbb" stroke-width="1.100"/><path d="M10.500 13V2M8.800 4l1.700-2.500L12.200 4" stroke="#aaa" stroke-width="1.100" fill="none"/></svg>
<span class="t" style="left:664.70px;top:165.85px;font:11px/1 'Liberation Sans',sans-serif;color:#b3b3b3;letter-spacing:-0.139px;">Orientare text</span>
<svg class="a" style="left:735.00px;top:168.50px;" width="6" height="4" viewBox="0 0 6 4"><path d="M0.500 0.500l2.500 2.500L5.500 0.500" fill="none" stroke="#bbb" stroke-width="1"/></svg>
<svg class="a" style="left:647.00px;top:185.00px;" width="14" height="13" viewBox="0 0 14 13"><rect x="0.600" y="1.600" width="12.500" height="10" fill="none" stroke="#bbb" stroke-width="1"/><path d="M7 0v13M5.500 3.500L7 2l1.500 1.500M5.500 9.500L7 11l1.500-1.500" stroke="#aaa" stroke-width="1" fill="none"/></svg>
<span class="t" style="left:664.70px;top:186.65px;font:11px/1 'Liberation Sans',sans-serif;color:#b3b3b3;letter-spacing:-0.090px;">Aliniere text</span>
<svg class="a" style="left:726.00px;top:189.50px;" width="6" height="4" viewBox="0 0 6 4"><path d="M0.500 0.500l2.500 2.500L5.500 0.500" fill="none" stroke="#bbb" stroke-width="1"/></svg>
<svg class="a" style="left:647.00px;top:206.00px;" width="14" height="13" viewBox="0 0 14 13"><path d="M0.500 1h7M0.500 3.500h9M0.500 6h5" stroke="#aaa" stroke-width="1.200"/><rect x="6.500" y="5.500" width="7" height="6.500" fill="#efefef" stroke="#bbb" stroke-width="1"/></svg>
<span class="t" style="left:664.70px;top:207.45px;font:11px/1 'Liberation Sans',sans-serif;color:#b3b3b3;letter-spacing:-0.285px;">Conversie la SmartArt</span>
<svg class="a" style="left:769.50px;top:210.00px;" width="6" height="4" viewBox="0 0 6 4"><path d="M0.500 0.500l2.500 2.500L5.500 0.500" fill="none" stroke="#bbb" stroke-width="1"/></svg>
<div style="left:798.80px;top:163.00px;width:117.70px;height:55.60px;background:#fff;border:1px solid #dadada;"></div>
<div style="left:904.00px;top:163.00px;width:12.50px;height:18.00px;background:#dedede;border:1px solid #d0d0d0;"></div>
<div style="left:904.00px;top:181.00px;width:12.50px;height:18.60px;background:#fff;border:1px solid #dadada;"></div>
<div style="left:904.00px;top:199.60px;width:12.50px;height:19.00px;background:#fff;border:1px solid #dadada;"></div>
<div style="left:909.00px;top:190.00px;width:2.00px;height:2.00px;background:#666;border-radius:50%;"></div>
<div style="left:907.50px;top:206.00px;width:5.00px;height:1.00px;background:#666;"></div>
<svg class="a" style="left:907.50px;top:208.50px;" width="5" height="3" viewBox="0 0 5 3"><path d="M0 0h5l-2.500 3z" fill="#666"/></svg>
<svg class="a" style="left:801.00px;top:168.00px;" width="14" height="12" viewBox="0 0 14 12"><rect x="0.600" y="0.600" width="12.800" height="10.800" fill="#fff" stroke="#666" stroke-width="1"/><rect x="1.500" y="1.500" width="5" height="5" fill="#9bbce0"/><path d="M8 3h4M8 5.500h4M2 8.500h10" stroke="#777" stroke-width="0.900"/></svg>
<svg class="a" style="left:818.00px;top:168.00px;" width="14" height="12" viewBox="0 0 14 12"><path d="M1.500 0.500l11 11" stroke="#555" stroke-width="1.100"/></svg>
<svg class="a" style="left:836.00px;top:168.00px;" width="14" height="12" viewBox="0 0 14 12"><path d="M1 0.500l11 10.500" stroke="#555" stroke-width="1.100"/><path d="M12.700 11.700l-3.300-.8 2.500-2.400z" fill="#555"/></svg>
<svg class="a" style="left:852.70px;top:168.00px;" width="14" height="12" viewBox="0 0 14 12"><rect x="0.600" y="1.600" width="12.800" height="8.800" fill="none" stroke="#555" stroke-width="1.100"/></svg>
<svg class="a" style="left:870.00px;top:168.00px;" width="14" height="12" viewBox="0 0 14 12"><ellipse cx="7" cy="6" rx="6.300" ry="4.600" fill="none" stroke="#555" stroke-width="1.100"/></svg>
<svg class="a" style="left:887.40px;top:168.00px;" width="14" height="12" viewBox="0 0 14 12"><rect x="0.600" y="1.600" width="12.800" height="8.800" rx="2.200" fill="none" stroke="#555" stroke-width="1.100"/></svg>
<svg class="a" style="left:801.00px;top:185.00px;" width="14" height="12" viewBox="0 0 14 12"><path d="M7 0.800L13 11H1z" fill="none" stroke="#555" stroke-width="1.100"/></svg>
<svg class="a" style="left:818.00px;top:185.00px;" width="14" height="12" viewBox="0 0 14 12"><path d="M1 1.500h5.500v9H13" fill="none" stroke="#555" stroke-width="1.100"/></svg>
<svg class="a" style="left:836.00px;top:185.00px;" width="14" height="12" viewBox="0 0 14 12"><path d="M0.500 1.500h6v8h4" fill="none" stroke="#555" stroke-width="1.100"/><path d="M13.500 9.500l-3 1.800v-3.600z" fill="#555"/></svg>
<svg class="a" style="left:852.70px;top:185.00px;" width="14" height="12" viewBox="0 0 14 12"><path d="M1 4h6V1l5.500 5L7 11V8H1z" fill="none" stroke="#555" stroke-width="1.100"/></svg>
<svg class="a" style="left:870.00px;top:185.00px;" width="14" height="12" viewBox="0 0 14 12"><path d="M4.500 0.600h5v5.400h3L7 11.400 1.500 6h3z" fill="none" stroke="#555" stroke-width="1.100"/></svg>
<svg class="a" style="left:887.40px;top:185.00px;" width="14" height="12" viewBox="0 0 14 12"><path d="M1 1h7a4 4 0 0 0 4.500 4v6H1z" fill="none" stroke="#555" stroke-width="1.100"/></svg>
<svg class="a" style="left:801.00px;top:201.80px;" width="14" height="12" viewBox="0 0 14 12"><path d="M4 0.500c-3 3 3 3 1 6s5 0 2 4M7 8l1.500 3.500" fill="none" stroke="#555" stroke-width="1.100"/></svg>
<svg class="a" style="left:818.00px;top:201.80px;" width="14" height="12" viewBox="0 0 14 12"><path d="M0.500 1c6 0 10 4 11 10.500" fill="none" stroke="#555" stroke-width="1.100"/></svg>
<svg class="a" style="left:836.00px;top:201.80px;" width="14" height="12" viewBox="0 0 14 12"><path d="M0.500 8C3-2 6-1 7 6s4 5 6.500 4" fill="none" stroke="#555" stroke-width="1.100"/></svg>
<span class="t" style="left:857.20px;top:202.60px;font:12px/1 'Liberation Sans',sans-serif;color:#555;">{</span>
<span class="t" style="left:874.50px;top:202.60px;font:12px/1 'Liberation Sans',sans-serif;color:#555;">}</span>
<svg class="a" style="left:887.40px;top:201.80px;" width="14" height="12" viewBox="0 0 14 12"><path d="M7 0.700l1.700 3.900 4.200.3-3.200 2.800 1 4.100L7 9.600l-3.700 2.200 1-4.100L1.100 4.900l4.200-.3z" fill="none" stroke="#555" stroke-width="1"/></svg>
<div style="left:929.50px;top:164.20px;width:10.50px;height:10.50px;background:#fff;border:1px solid #777;"></div>
<div style="left:934.50px;top:170.00px;width:13.00px;height:13.00px;background:#f0c060;"></div>
<div style="left:943.50px;top:178.70px;width:10.50px;height:10.50px;background:#fff;border:1px solid #777;"></div>
<span class="t" style="left:922.00px;top:195.85px;font:11px/1 'Liberation Sans',sans-serif;color:#444;letter-spacing:-0.247px;">Aranjare</span>
<svg class="a" style="left:938.50px;top:212.50px;" width="6" height="4" viewBox="0 0 6 4"><path d="M0.500 0.500l2.500 2.500L5.500 0.500" fill="none" stroke="#444" stroke-width="1"/></svg>
<div style="left:975.00px;top:164.50px;width:22.00px;height:21.00px;background:#f2f2f2;border:1px solid #d8d8d8;border-radius:4px;"></div>
<svg class="a" style="left:985.00px;top:172.00px;" width="16" height="16" viewBox="0 0 16 16"><path d="M14.500 1L6 10l2 1.500z" fill="#b5b5b5"/><path d="M5.500 10.500c-2 0-2 3-4.500 3.500 3 1 6 0 6.500-2z" fill="#aaa"/></svg>
<span class="t" style="left:972.90px;top:195.85px;font:11px/1 'Liberation Sans',sans-serif;color:#bcbcbc;letter-spacing:-0.172px;">Stiluri</span>
<span class="t" style="left:965.70px;top:209.95px;font:11px/1 'Liberation Sans',sans-serif;color:#bcbcbc;letter-spacing:-0.080px;">rapide</span>
<svg class="a" style="left:999.50px;top:212.50px;" width="6" height="4" viewBox="0 0 6 4"><path d="M0.500 0.500l2.500 2.500L5.500 0.500" fill="none" stroke="#bbb" stroke-width="1"/></svg>
<svg class="a" style="left:1013.00px;top:164.50px;" width="14" height="13" viewBox="0 0 14 13"><path d="M4 3.500l6 5.500-4 3.500-4.500-4.500z" fill="none" stroke="#bbb" stroke-width="1.100"/><path d="M4 3.500V1M12 9c0 1.500 1.500 2 1.500 3a1.500 1.500 0 0 1-3 0c0-1 1.500-1.500 1.500-3z" stroke="#bbb" fill="#ccc" stroke-width=".8"/></svg>
<span class="t" style="left:1029.00px;top:165.85px;font:11px/1 'Liberation Sans',sans-serif;color:#b3b3b3;letter-spacing:-0.057px;">Umplere formă</span>
<svg class="a" style="left:1104.50px;top:168.50px;" width="6" height="4" viewBox="0 0 6 4"><path d="M0.500 0.500l2.500 2.500L5.500 0.500" fill="none" stroke="#bbb" stroke-width="1"/></svg>
<svg class="a" style="left:1012.00px;top:185.50px;" width="15" height="12" viewBox="0 0 15 12"><path d="M1 1h10.500L7 10H1z" fill="none" stroke="#bbb" stroke-width="1.100"/><path d="M13.500 1l-6 8" stroke="#aaa" stroke-width="1.400"/></svg>
<span class="t" style="left:1029.00px;top:186.65px;font:11px/1 'Liberation Sans',sans-serif;color:#b3b3b3;letter-spacing:-0.149px;">Contur formă</span>
<svg class="a" style="left:1095.50px;top:189.50px;" width="6" height="4" viewBox="0 0 6 4"><path d="M0.500 0.500l2.500 2.500L5.500 0.500" fill="none" stroke="#bbb" stroke-width="1"/></svg>
<svg class="a" style="left:1012.50px;top:206.00px;" width="15" height="13" viewBox="0 0 15 13"><ellipse cx="7.500" cy="5.500" rx="6" ry="4.500" fill="#e4e4e4" stroke="#bbb" stroke-width="1"/><path d="M2.500 9.500c3 3 8 2.500 10.500-1" stroke="#aaa" stroke-width="1.500" fill="none"/></svg>
<span class="t" style="left:1029.00px;top:207.45px;font:11px/1 'Liberation Sans',sans-serif;color:#b3b3b3;letter-spacing:-0.197px;">Efecte formă</span>
<svg class="a" style="left:1092.50px;top:210.00px;" width="6" height="4" viewBox="0 0 6 4"><path d="M0.500 0.500l2.500 2.500L5.500 0.500" fill="none" stroke="#bbb" stroke-width="1"/></svg>
<svg class="a" style="left:1133.00px;top:164.00px;" width="14" height="14" viewBox="0 0 14 14"><circle cx="8.500" cy="5.500" r="4.300" fill="none" stroke="#2b6cb5" stroke-width="1.500"/><path d="M5.500 8.500L1 13" stroke="#2b6cb5" stroke-width="2"/></svg>
<span class="t" style="left:1150.20px;top:165.85px;font:11px/1 'Liberation Sans',sans-serif;color:#444;letter-spacing:-0.600px;">Găsire</span>
<span class="t" style="left:1133.50px;top:186.78px;font:bold 6.5px/1 'Liberation Sans',sans-serif;color:#7a4a9a;">ab</span>
<span class="t" style="left:1136.00px;top:192.78px;font:bold 6.5px/1 'Liberation Sans',sans-serif;color:#2b6cb5;">ac</span>
<svg class="a" style="left:1132.00px;top:193.00px;" width="5" height="4" viewBox="0 0 5 4"><path d="M0 2h4M2.500 .5L4 2 2.500 3.500" stroke="#2b6cb5" stroke-width=".8" fill="none"/></svg>
<span class="t" style="left:1150.20px;top:186.65px;font:11px/1 'Liberation Sans',sans-serif;color:#444;letter-spacing:-0.131px;">Înlocuire</span>
<svg class="a" style="left:1200.50px;top:189.50px;" width="6" height="4" viewBox="0 0 6 4"><path d="M0.500 0.500l2.500 2.500L5.500 0.500" fill="none" stroke="#444" stroke-width="1"/></svg>
<svg class="a" style="left:1135.50px;top:205.00px;" width="10" height="14" viewBox="0 0 10 14"><path d="M1 1v10l2.700-2.500L5.500 13l1.800-.8-1.700-4H9z" fill="#fff" stroke="#777" stroke-width="1"/></svg>
<span class="t" style="left:1150.20px;top:207.45px;font:11px/1 'Liberation Sans',sans-serif;color:#444;letter-spacing:-0.375px;">Selectare</span>
<svg class="a" style="left:1196.80px;top:210.00px;" width="6" height="4" viewBox="0 0 6 4"><path d="M0.500 0.500l2.500 2.500L5.500 0.500" fill="none" stroke="#444" stroke-width="1"/></svg>
<div style="left:1268.00px;top:171.50px;width:10.00px;height:10.00px;background:#f79a1e;border-radius:50%;box-shadow:0 0 2px #f7b860;"></div>
<span class="t" style="left:1274.00px;top:195.95px;font:11px/1 'Liberation Sans',sans-serif;color:#666;letter-spacing:-0.190px;transform:translateX(-50%);">Programe de</span>
<span class="t" style="left:1274.00px;top:209.95px;font:11px/1 'Liberation Sans',sans-serif;color:#666;letter-spacing:-0.041px;transform:translateX(-50%);">completare</span>
<svg class="a" style="left:1371.00px;top:231.50px;" width="10" height="6" viewBox="0 0 10 6"><path d="M1 5l4-4 4 4" fill="none" stroke="#666" stroke-width="1.200"/></svg>
<div style="left:209.80px;top:241.80px;width:14.00px;height:14.40px;background:#fff;border:1px solid #bdbdbd;"><svg class="a" style="left:2.5px;top:4.2px" width="7" height="4" viewBox="0 0 7 4"><path d="M0 4l3.500-4 3.500 4z" fill="#444"/></svg></div>
<div style="left:209.80px;top:564.00px;width:14.00px;height:218.50px;background:#fff;border:1px solid #bdbdbd;"></div>
<div style="left:209.80px;top:804.50px;width:14.00px;height:13.20px;background:#fff;border:1px solid #bdbdbd;"><svg class="a" style="left:2.5px;top:3.6px" width="7" height="4" viewBox="0 0 7 4"><path d="M0 0l3.500 4 3.500-4z" fill="#444"/></svg></div>
<div style="left:226.30px;top:240.20px;width:1.00px;height:580.00px;background:#d4d4d4;"></div>
<div style="left:41.30px;top:256.60px;width:147.40px;height:83.80px;background:#e3e3dd;overflow:hidden;box-shadow:0 0 0 .5px #cfcfcf;"><div style="left:39px;top:4px;width:63.5px;height:13px;background:#fff;border:1px solid #b9b65a;"></div><div style="left:56px;top:7px;width:30px;height:1px;background:#555;opacity:.68;filter:blur(.3px)"></div><div style="left:44px;top:9.5px;width:54px;height:1px;background:#8a8ab0;opacity:.68;filter:blur(.3px)"></div><div style="left:44px;top:12px;width:54px;height:1px;background:#8a8ab0;opacity:.68;filter:blur(.3px)"></div><div style="left:2.5px;top:31px;width:44.5px;height:15.5px;background:#fff;border:1px solid #b9b65a;"></div><div style="left:12px;top:33.5px;width:26px;height:1px;background:#444;opacity:.68;filter:blur(.3px)"></div><div style="left:4.5px;top:36.5px;width:40px;height:1px;background:#666;opacity:.68;filter:blur(.3px)"></div><div style="left:4.5px;top:39.5px;width:40px;height:1px;background:#666;opacity:.68;filter:blur(.3px)"></div><div style="left:4.5px;top:42.5px;width:16px;height:1px;background:#666;opacity:.68;filter:blur(.3px)"></div><div style="left:94.3px;top:31px;width:50px;height:15.5px;background:#fff;border:1px solid #b9b65a;"></div><div style="left:104px;top:33.5px;width:30px;height:1px;background:#444;opacity:.68;filter:blur(.3px)"></div><div style="left:96.5px;top:36.5px;width:42px;height:1px;background:#666;opacity:.68;filter:blur(.3px)"></div><div style="left:96.5px;top:39.5px;width:14px;height:1px;background:#666;opacity:.68;filter:blur(.3px)"></div><div style="left:96.5px;top:42.5px;width:40px;height:1px;background:#666;opacity:.68;filter:blur(.3px)"></div><div style="left:44px;top:62.5px;width:59.5px;height:11.8px;background:#fff;border:1px solid #b9b65a;"></div><div style="left:58px;top:64.8px;width:30px;height:1px;background:#444;opacity:.68;filter:blur(.3px)"></div><div style="left:46px;top:67.5px;width:54px;height:1px;background:#666;opacity:.68;filter:blur(.3px)"></div><div style="left:46px;top:70.3px;width:46px;height:1px;background:#666;opacity:.68;filter:blur(.3px)"></div><div style="left:50.200px;top:20px;width:41px;height:41px;border-radius:50%;background:#fff;border:.5px solid #ddd"></div><div style="left:51px;top:40px;width:40px;height:1.200px;background:#4a4a4a;transform:rotate(50deg)"></div><div style="left:51px;top:40px;width:40px;height:1.200px;background:#4a4a4a;transform:rotate(-50deg)"></div><div style="left:0;top:77.500px;width:148px;height:6.500px;background:#81837b"></div><div style="left:0;top:76.300px;width:148px;height:1.200px;background:#c4c5bd"></div></div>
<span class="t" style="left:20.30px;top:255.10px;font:12px/1 'Liberation Sans',sans-serif;color:#595959;">9</span>
<div style="left:41.30px;top:358.80px;width:147.40px;height:83.80px;background:#e3e3dd;overflow:hidden;box-shadow:0 0 0 .5px #cfcfcf;"><div style="left:42.4px;top:8px;width:63.5px;height:6px;background:#fff;border:1px solid #b9b65a;"></div><div style="left:50px;top:10.5px;width:48px;height:1px;background:#333;opacity:.68;filter:blur(.3px)"></div><div style="left:9.9px;top:20.5px;width:125px;height:45.5px;background:#fff;border:1px solid #d9534a;border-width:1.200px;"></div><div style="left:12px;top:25px;width:120px;height:1px;background:#c9c9c9;opacity:.68;filter:blur(.3px)"></div><div style="left:12px;top:29.5px;width:14px;height:1px;background:#c9c9c9;opacity:.68;filter:blur(.3px)"></div><div style="left:12px;top:34px;width:38px;height:1.4px;background:#222;opacity:.68;filter:blur(.3px)"></div><div style="left:12px;top:38.5px;width:32px;height:1.4px;background:#222;opacity:.68;filter:blur(.3px)"></div><div style="left:45px;top:38.5px;width:86px;height:1px;background:#bbb;opacity:.68;filter:blur(.3px)"></div><div style="left:12px;top:42.5px;width:20px;height:1px;background:#ccc;opacity:.68;filter:blur(.3px)"></div><div style="left:12px;top:47px;width:36px;height:1.4px;background:#222;opacity:.68;filter:blur(.3px)"></div><div style="left:49px;top:47px;width:76px;height:1px;background:#bbb;opacity:.68;filter:blur(.3px)"></div><div style="left:12px;top:51.5px;width:28px;height:1.4px;background:#222;opacity:.68;filter:blur(.3px)"></div><div style="left:41px;top:51.5px;width:62px;height:1px;background:#bbb;opacity:.68;filter:blur(.3px)"></div><div style="left:104px;top:51.5px;width:26px;height:1.4px;background:#222;opacity:.68;filter:blur(.3px)"></div><div style="left:12px;top:56px;width:30px;height:1.4px;background:#222;opacity:.68;filter:blur(.3px)"></div><div style="left:43px;top:56px;width:48px;height:1px;background:#bbb;opacity:.68;filter:blur(.3px)"></div><div style="left:12px;top:60.5px;width:27px;height:1.4px;background:#222;opacity:.68;filter:blur(.3px)"></div><div style="left:40px;top:60.5px;width:78px;height:1px;background:#9fc8b8;opacity:.68;filter:blur(.3px)"></div><div style="left:0;top:77.500px;width:148px;height:6.500px;background:#81837b"></div><div style="left:0;top:76.300px;width:148px;height:1.200px;background:#c4c5bd"></div></div>
<span class="t" style="left:13.80px;top:357.30px;font:12px/1 'Liberation Sans',sans-serif;color:#595959;letter-spacing:0.126px;">10</span>
<div style="left:41.30px;top:460.60px;width:147.40px;height:83.80px;background:#e3e3dd;overflow:hidden;box-shadow:0 0 0 .5px #cfcfcf;"><div style="left:6.5px;top:8.5px;width:65.5px;height:7px;background:#fff;border:1px solid #b9b65a;"></div><div style="left:12px;top:11.5px;width:54px;height:1px;background:#888;opacity:.68;filter:blur(.3px)"></div><div style="left:2.5px;top:17.5px;width:73.5px;height:29.5px;background:#fff;border:1px solid #9a7fc0;"></div><div style="left:4px;top:21px;width:70px;height:1px;background:#999;opacity:.68;filter:blur(.3px)"></div><div style="left:4px;top:24.5px;width:12px;height:1px;background:#999;opacity:.68;filter:blur(.3px)"></div><div style="left:4px;top:28px;width:70px;height:1px;background:#999;opacity:.68;filter:blur(.3px)"></div><div style="left:4px;top:31.5px;width:66px;height:1px;background:#999;opacity:.68;filter:blur(.3px)"></div><div style="left:4px;top:35px;width:70px;height:1px;background:#999;opacity:.68;filter:blur(.3px)"></div><div style="left:4px;top:38.5px;width:14px;height:1px;background:#999;opacity:.68;filter:blur(.3px)"></div><div style="left:4px;top:20.8px;width:10px;height:1.3px;background:#222;opacity:.68;filter:blur(.3px)"></div><div style="left:4px;top:27.8px;width:16px;height:1.3px;background:#222;opacity:.68;filter:blur(.3px)"></div><div style="left:4px;top:34.8px;width:16px;height:1.3px;background:#222;opacity:.68;filter:blur(.3px)"></div><div style="left:87px;top:19.5px;width:46px;height:7.5px;background:#fff;border:1px solid #b9b65a;"></div><div style="left:94px;top:22.8px;width:32px;height:1px;background:#999;opacity:.68;filter:blur(.3px)"></div><div style="left:80.5px;top:29.5px;width:64px;height:36px;background:#fff;border:1px solid #9a7fc0;"></div><div style="left:82.5px;top:33px;width:60px;height:1px;background:#999;opacity:.68;filter:blur(.3px)"></div><div style="left:82.5px;top:33px;width:30px;height:1.3px;background:#222;opacity:.68;filter:blur(.3px)"></div><div style="left:82.5px;top:36.5px;width:28px;height:1px;background:#999;opacity:.68;filter:blur(.3px)"></div><div style="left:82.5px;top:40px;width:60px;height:1px;background:#999;opacity:.68;filter:blur(.3px)"></div><div style="left:82.5px;top:40px;width:10px;height:1.3px;background:#222;opacity:.68;filter:blur(.3px)"></div><div style="left:82.5px;top:43.5px;width:18px;height:1px;background:#999;opacity:.68;filter:blur(.3px)"></div><div style="left:82.5px;top:47px;width:60px;height:1px;background:#999;opacity:.68;filter:blur(.3px)"></div><div style="left:82.5px;top:47px;width:14px;height:1.3px;background:#222;opacity:.68;filter:blur(.3px)"></div><div style="left:82.5px;top:50.5px;width:30px;height:1px;background:#999;opacity:.68;filter:blur(.3px)"></div><div style="left:82.5px;top:54px;width:56px;height:1px;background:#999;opacity:.68;filter:blur(.3px)"></div><div style="left:82.5px;top:54px;width:12px;height:1.3px;background:#222;opacity:.68;filter:blur(.3px)"></div><div style="left:82.5px;top:57.5px;width:40px;height:1px;background:#999;opacity:.68;filter:blur(.3px)"></div><div style="left:0;top:77.500px;width:148px;height:6.500px;background:#81837b"></div><div style="left:0;top:76.300px;width:148px;height:1.200px;background:#c4c5bd"></div></div>
<span class="t" style="left:13.80px;top:459.10px;font:12px/1 'Liberation Sans',sans-serif;color:#595959;letter-spacing:0.571px;">11</span>
<div style="left:37.20px;top:559.20px;width:155.80px;height:91.20px;background:#c4421e;"></div>
<div style="left:41.30px;top:563.00px;width:147.40px;height:83.80px;background:#e3e3dd;overflow:hidden;box-shadow:0 0 0 .5px #cfcfcf;"><div style="left:16.8px;top:2.5px;width:40.7px;height:7px;background:#fff;border:1px solid #e8a04a;"></div><div style="left:22px;top:5.7px;width:30px;height:1.3px;background:#222;opacity:.68;filter:blur(.3px)"></div><div style="left:3.2px;top:11.7px;width:62px;height:50.5px;background:#fff;border:1px solid #a3a34a;"></div><div style="left:89.5px;top:3px;width:32.8px;height:7px;background:#fff;border:1px solid #b9b65a;"></div><div style="left:94px;top:6.2px;width:24px;height:1.3px;background:#222;opacity:.68;filter:blur(.3px)"></div><div style="left:78.5px;top:11.5px;width:64.7px;height:39.8px;background:#fff;border:1px solid #cf4a3c;"></div><div style="left:14.5px;top:17.0px;width:45px;height:1px;background:#a9a9a9;opacity:.68;filter:blur(.3px)"></div><div style="left:14.5px;top:21.43px;width:45px;height:1px;background:#a9a9a9;opacity:.68;filter:blur(.3px)"></div><div style="left:14.5px;top:25.86px;width:45px;height:1px;background:#a9a9a9;opacity:.68;filter:blur(.3px)"></div><div style="left:14.5px;top:30.29px;width:45px;height:1px;background:#a9a9a9;opacity:.68;filter:blur(.3px)"></div><div style="left:14.5px;top:34.72px;width:45px;height:1px;background:#a9a9a9;opacity:.68;filter:blur(.3px)"></div><div style="left:14.5px;top:39.15px;width:45px;height:1px;background:#a9a9a9;opacity:.68;filter:blur(.3px)"></div><div style="left:14.5px;top:43.58px;width:45px;height:1px;background:#a9a9a9;opacity:.68;filter:blur(.3px)"></div><div style="left:14.5px;top:48.01px;width:45px;height:1px;background:#a9a9a9;opacity:.68;filter:blur(.3px)"></div><div style="left:14.5px;top:52.44px;width:45px;height:1px;background:#a9a9a9;opacity:.68;filter:blur(.3px)"></div><div style="left:14.5px;top:56.87px;width:45px;height:1px;background:#a9a9a9;opacity:.68;filter:blur(.3px)"></div><div style="left:84px;top:15.5px;width:57px;height:1px;background:#a9a9a9;opacity:.68;filter:blur(.3px)"></div><div style="left:84px;top:19.93px;width:57px;height:1px;background:#a9a9a9;opacity:.68;filter:blur(.3px)"></div><div style="left:84px;top:24.36px;width:57px;height:1px;background:#a9a9a9;opacity:.68;filter:blur(.3px)"></div><div style="left:84px;top:28.79px;width:57px;height:1px;background:#a9a9a9;opacity:.68;filter:blur(.3px)"></div><div style="left:84px;top:33.22px;width:57px;height:1px;background:#a9a9a9;opacity:.68;filter:blur(.3px)"></div><div style="left:84px;top:37.65px;width:57px;height:1px;background:#a9a9a9;opacity:.68;filter:blur(.3px)"></div><div style="left:84px;top:42.08px;width:57px;height:1px;background:#a9a9a9;opacity:.68;filter:blur(.3px)"></div><div style="left:84px;top:46.51px;width:57px;height:1px;background:#a9a9a9;opacity:.68;filter:blur(.3px)"></div><div style="left:0;top:77.500px;width:148px;height:6.500px;background:#81837b"></div><div style="left:0;top:76.300px;width:148px;height:1.200px;background:#c4c5bd"></div></div>
<span class="t" style="left:13.80px;top:561.50px;font:12px/1 'Liberation Sans',sans-serif;color:#c4421e;letter-spacing:0.126px;">12</span>
<div style="left:41.30px;top:664.70px;width:147.40px;height:83.80px;background:#e3e3dd;overflow:hidden;box-shadow:0 0 0 .5px #cfcfcf;"><div style="left:27px;top:5.5px;width:96.5px;height:7.5px;background:#fff;border:1px solid #cf4a3c;border-width:1.200px;"></div><div style="left:31px;top:8.8px;width:88px;height:1.4px;background:#222;opacity:.68;filter:blur(.3px)"></div><div style="left:10.5px;top:19px;width:130.5px;height:46px;background:#fff;border:1px solid #b9b65a;border-width:1.200px;"></div><div style="left:14px;top:22.5px;width:124px;height:1px;background:#b5b5b5;opacity:.68;filter:blur(.3px)"></div><div style="left:14px;top:26.1px;width:124px;height:1px;background:#b5b5b5;opacity:.68;filter:blur(.3px)"></div><div style="left:14px;top:29.7px;width:124px;height:1px;background:#b5b5b5;opacity:.68;filter:blur(.3px)"></div><div style="left:14px;top:33.3px;width:124px;height:1px;background:#b5b5b5;opacity:.68;filter:blur(.3px)"></div><div style="left:14px;top:36.9px;width:124px;height:1px;background:#b5b5b5;opacity:.68;filter:blur(.3px)"></div><div style="left:14px;top:40.5px;width:124px;height:1px;background:#b5b5b5;opacity:.68;filter:blur(.3px)"></div><div style="left:14px;top:44.1px;width:124px;height:1px;background:#b5b5b5;opacity:.68;filter:blur(.3px)"></div><div style="left:14px;top:47.7px;width:124px;height:1px;background:#b5b5b5;opacity:.68;filter:blur(.3px)"></div><div style="left:14px;top:51.3px;width:124px;height:1px;background:#b5b5b5;opacity:.68;filter:blur(.3px)"></div><div style="left:14px;top:54.9px;width:124px;height:1px;background:#b5b5b5;opacity:.68;filter:blur(.3px)"></div><div style="left:14px;top:58.5px;width:124px;height:1px;background:#b5b5b5;opacity:.68;filter:blur(.3px)"></div><div style="left:14px;top:62.1px;width:124px;height:1px;background:#b5b5b5;opacity:.68;filter:blur(.3px)"></div><div style="left:14px;top:44.1px;width:74px;height:1.3px;background:#333;opacity:.68;filter:blur(.3px)"></div><div style="left:14px;top:54.9px;width:124px;height:1.3px;background:#333;opacity:.68;filter:blur(.3px)"></div><div style="left:14px;top:58.5px;width:64px;height:1.3px;background:#333;opacity:.68;filter:blur(.3px)"></div><div style="left:0;top:77.500px;width:148px;height:6.500px;background:#81837b"></div><div style="left:0;top:76.300px;width:148px;height:1.200px;background:#c4c5bd"></div></div>
<span class="t" style="left:13.80px;top:663.20px;font:12px/1 'Liberation Sans',sans-serif;color:#595959;letter-spacing:0.126px;">13</span>
<div style="left:41.30px;top:766.40px;width:147.40px;height:53.50px;background:#e3e3dd;overflow:hidden;box-shadow:0 0 0 .5px #cfcfcf;"><div style="left:4.500px;top:3px;width:39px;height:12.500px;background:#1e7be0"></div><div style="left:6.500px;top:5px;width:7px;height:8px;border:1.200px solid #fff;border-radius:2px"></div><div style="left:16px;top:5px;width:14px;height:2.500px;background:#fff"></div><div style="left:16px;top:9.500px;width:22px;height:1px;background:#9cc4f4"></div><div style="left:108px;top:2px;width:36.500px;height:17px;background:#fafafa"></div><div class="bl" style="left:122px;top:4px;width:8px;height:10px;border-radius:50%;background:#b5a86a"></div><svg class="a" style="left:37px;top:19.500px;filter:blur(.3px)" width="60" height="24" viewBox="0 0 60 24"><g fill="none" stroke="#c49a3e" stroke-width="1.100" stroke-linecap="round"><path d="M30 13c-6 6-12-2-18-5-5-2.500-9 0-8.500 3.500.4 2.800 4.500 3 4.800.6.200-1.600-1.800-2.200-2.500-1"/><path d="M30 13c6 6 12 6 18 3 5-2.500 9 0 8.500 3.500-.4 2.800-4.500 3-4.800.6-.2-1.600 1.800-2.200 2.500-1"/><path d="M30 1.500c-2.500 2.500-2.500 6 0 8.500 2.500-2.500 2.500-6 0-8.500zM30 11c-2-3.500-6-3.500-6.500-.5-.3 2.200 3 3.500 6.500 1.500M30 11c2-3.500 6-3.500 6.500-.5.3 2.200-3 3.500-6.500 1.500"/></g></svg><div class="bl" style="left:128px;top:30px;width:7px;height:28px;border-radius:50%;background:#b5584a;transform:rotate(36deg)"></div><span class="t" style="left:10.2px;top:34.600px;font:27px/1 'Liberation Serif',serif;color:#1e1e1e;transform-origin:0 0;transform:scaleX(0.843)">Mulțumesc!</span></div>
<span class="t" style="left:13.80px;top:764.90px;font:12px/1 'Liberation Sans',sans-serif;color:#595959;letter-spacing:0.126px;">14</span>
<svg class="a" style="left:159.00px;top:636.50px;" width="10" height="15" viewBox="0 0 10 15"><path d="M1 1v11l2.700-2.400 1.800 4.200 1.700-.8-1.800-4H9z" fill="#fff" stroke="#222" stroke-width="1"/></svg>
<div style="left:326.50px;top:246.20px;width:947.70px;height:533.00px;background:linear-gradient(180deg,#e6e6e1 0,#e3e3dd 40%,#e1e1db 100%);box-shadow:0 0 0 .6px #d2d2d0;"></div>
<div style="left:326.50px;top:738.70px;width:947.70px;height:4.40px;background:#abaca4;"></div>
<div style="left:326.50px;top:743.00px;width:947.70px;height:36.20px;background:#80837a;"></div>
<div style="left:434.70px;top:259.60px;width:262.00px;height:43.80px;background:#fff;border:2.2px solid #e6984a;box-shadow:0 0 1.500px rgba(0,0,0,.25);"></div>
<span class="t" style="left:458.70px;top:272.02px;font:bold 22.5px/1 'Liberation Serif',serif;color:#111;letter-spacing:0.442px;">6. Stabilirea limitelor</span>
<div style="left:902.70px;top:262.60px;width:211.00px;height:44.50px;background:#fff;border:2.2px solid #bcb84c;box-shadow:0 0 1.500px rgba(0,0,0,.25);"></div>
<span class="t" style="left:930.50px;top:275.62px;font:bold 22.5px/1 'Liberation Serif',serif;color:#111;letter-spacing:0.508px;">6. Regula 80/20</span>
<div style="left:346.70px;top:319.40px;width:399.60px;height:324.60px;background:#fff;border:2px solid #96963e;box-shadow:0 0 1.500px rgba(0,0,0,.2);"></div>
<div style="left:831.30px;top:318.00px;width:417.20px;height:255.40px;background:#fff;border:2px solid #c8372c;box-shadow:0 0 1.500px rgba(0,0,0,.2);"></div>
<span class="t" style="left:420.60px;top:345.11px;font:23.6px/1 'Liberation Serif',serif;color:#1a1a1a;word-spacing:6.942px;">Învață să spui <b>„nu”</b> și să-ți</span>
<span class="t" style="left:420.60px;top:373.55px;font:23.6px/1 'Liberation Serif',serif;color:#1a1a1a;">protejezi timpul și energia</span>
<span class="t" style="left:420.60px;top:401.99px;font:23.6px/1 'Liberation Serif',serif;color:#1a1a1a;word-spacing:15.105px;">Identifică ce activități sau</span>
<span class="t" style="left:420.60px;top:430.43px;font:23.6px/1 'Liberation Serif',serif;color:#1a1a1a;">cerințe te epuizează</span>
<span class="t" style="left:420.60px;top:458.87px;font:23.6px/1 'Liberation Serif',serif;color:#1a1a1a;word-spacing:9.412px;">Formulează un răspuns clar</span>
<span class="t" style="left:420.60px;top:487.31px;font:23.6px/1 'Liberation Serif',serif;color:#1a1a1a;word-spacing:2.365px;">și politicos: „Îmi pare rău, nu</span>
<span class="t" style="left:420.60px;top:515.75px;font:23.6px/1 'Liberation Serif',serif;color:#1a1a1a;word-spacing:9.448px;">pot să mă ocup acum, dar</span>
<span class="t" style="left:420.60px;top:544.19px;font:23.6px/1 'Liberation Serif',serif;color:#1a1a1a;">putem discuta mai târziu</span>
<span class="t" style="left:420.60px;top:572.63px;font:23.6px/1 'Liberation Serif',serif;color:#1a1a1a;word-spacing:20.035px;">Menține consecvența, fără</span>
<span class="t" style="left:420.60px;top:601.07px;font:23.6px/1 'Liberation Serif',serif;color:#1a1a1a;">justificări excesive</span>
<span class="t" style="left:390.50px;top:347.20px;font:22.656px/1 'Liberation Serif',serif;color:#1a1a1a;">•</span>
<span class="t" style="left:390.50px;top:404.08px;font:22.656px/1 'Liberation Serif',serif;color:#1a1a1a;">•</span>
<span class="t" style="left:390.50px;top:460.96px;font:22.656px/1 'Liberation Serif',serif;color:#1a1a1a;">•</span>
<span class="t" style="left:390.50px;top:574.72px;font:22.656px/1 'Liberation Serif',serif;color:#1a1a1a;">•</span>
<span class="t" style="left:866.50px;top:335.11px;font:23.6px/1 'Liberation Serif',serif;color:#1a1a1a;word-spacing:14.450px;">Concentrează-te pe activitățile care</span>
<span class="t" style="left:866.50px;top:363.55px;font:23.6px/1 'Liberation Serif',serif;color:#1a1a1a;">aduc cele mai mari beneficii.</span>
<span class="t" style="left:866.50px;top:391.99px;font:23.6px/1 'Liberation Serif',serif;color:#1a1a1a;word-spacing:10.943px;">Identifică activitățile care contribuie</span>
<span class="t" style="left:866.50px;top:420.43px;font:23.6px/1 'Liberation Serif',serif;color:#1a1a1a;word-spacing:4.835px;">cel mai mult la starea ta de bine sau</span>
<span class="t" style="left:866.50px;top:448.87px;font:23.6px/1 'Liberation Serif',serif;color:#1a1a1a;">rezultate profesionale.</span>
<span class="t" style="left:866.50px;top:477.31px;font:23.6px/1 'Liberation Serif',serif;color:#1a1a1a;">Prioritizează zilnic.</span>
<span class="t" style="left:866.50px;top:505.75px;font:23.6px/1 'Liberation Serif',serif;color:#1a1a1a;word-spacing:10.297px;">Redu timpul și energia investită în</span>
<span class="t" style="left:866.50px;top:534.19px;font:23.6px/1 'Liberation Serif',serif;color:#1a1a1a;">activitățile cu impact redus.</span>
<span class="t" style="left:836.60px;top:337.20px;font:22.656px/1 'Liberation Serif',serif;color:#1a1a1a;">•</span>
<span class="t" style="left:836.60px;top:394.08px;font:22.656px/1 'Liberation Serif',serif;color:#1a1a1a;">•</span>
<span class="t" style="left:836.60px;top:479.40px;font:22.656px/1 'Liberation Serif',serif;color:#1a1a1a;">•</span>
<span class="t" style="left:836.60px;top:507.84px;font:22.656px/1 'Liberation Serif',serif;color:#1a1a1a;">•</span>
<svg class="a" style="left:866.50px;top:498.70px;" width="120" height="4" viewBox="0 0 120 4"><path d="M0 2.500 q1.500 -2.5 3 0 q1.500 2.5 3 0 q1.500 -2.5 3 0 q1.500 2.5 3 0 q1.500 -2.5 3 0 q1.500 2.5 3 0 q1.500 -2.5 3 0 q1.500 2.5 3 0 q1.500 -2.5 3 0 q1.500 2.5 3 0 q1.500 -2.5 3 0 q1.500 2.5 3 0 q1.500 -2.5 3 0 q1.500 2.5 3 0 q1.500 -2.5 3 0 q1.500 2.5 3 0 q1.500 -2.5 3 0 q1.500 2.5 3 0 q1.500 -2.5 3 0 q1.500 2.5 3 0 q1.500 -2.5 3 0 q1.500 2.5 3 0 q1.500 -2.5 3 0 q1.500 2.5 3 0 q1.500 -2.5 3 0 q1.500 2.5 3 0 q1.500 -2.5 3 0 q1.500 2.5 3 0 q1.500 -2.5 3 0 q1.500 2.5 3 0 q1.500 -2.5 3 0 q1.500 2.5 3 0 q1.500 -2.5 3 0 q1.500 2.5 3 0 q1.500 -2.5 3 0 q1.500 2.5 3 0 q1.500 -2.5 3 0 q1.500 2.5 3 0 q1.500 -2.5 3 0" fill="none" stroke="#e0483c" stroke-width="1.15"/></svg>
<div style="left:1372.80px;top:243.00px;width:14.50px;height:12.50px;background:#fff;border:1px solid #bdbdbd;"><svg class="a" style="left:2.8px;top:3.2px" width="7" height="4" viewBox="0 0 7 4"><path d="M0 4l3.500-4 3.500 4z" fill="#444"/></svg></div>
<div style="left:1372.80px;top:624.40px;width:14.50px;height:33.30px;background:#fff;border:1px solid #bdbdbd;"></div>
<div style="left:1372.80px;top:724.20px;width:14.50px;height:12.60px;background:#fff;border:1px solid #bdbdbd;"><svg class="a" style="left:2.8px;top:3.3px" width="7" height="4" viewBox="0 0 7 4"><path d="M0 0l3.500 4 3.500-4z" fill="#444"/></svg></div>
<svg class="a" style="left:1375.50px;top:741.00px;" width="9" height="11" viewBox="0 0 9 11"><path d="M4.500 0l4.500 4.500H0zM4.500 4.500l4.500 4.500H0z" fill="#555"/><path d="M2.500 9h4v2h-4z" fill="#555"/></svg>
<svg class="a" style="left:1375.50px;top:755.00px;" width="9" height="11" viewBox="0 0 9 11"><path d="M4.500 11L0 6.500h9zM4.500 6.500L0 2h9z" fill="#555"/><path d="M2.500 0h4v2h-4z" fill="#555"/></svg>
<div style="left:227.30px;top:785.60px;width:1160.70px;height:1.00px;background:#d8d8d8;"></div>
<div style="left:227.30px;top:786.60px;width:1160.70px;height:33.50px;background:#ebebeb;"></div>
<span class="t" style="left:236.80px;top:795.50px;font:12px/1 'Liberation Sans',sans-serif;color:#6b6b6b;letter-spacing:0.466px;">Faceți clic pentru a adăuga note</span>
<div style="left:9.50px;top:820.00px;width:1378.30px;height:19.30px;background:#f2f2f2;border-top:1px solid #dcdcdc;"></div>
<span class="t" style="left:20.30px;top:824.94px;font:9.6px/1 'Liberation Sans',sans-serif;color:#555;letter-spacing:-0.074px;">Diapozitiv 12 din 14</span>
<svg class="a" style="left:119.50px;top:824.00px;" width="13" height="10" viewBox="0 0 13 10"><rect x="0.500" y="0.500" width="5.500" height="9" fill="none" stroke="#777" stroke-width="1"/><path d="M7.500 1l4.500 7M12 1L7.500 8" stroke="#777" stroke-width="1"/></svg>
<span class="t" style="left:148.70px;top:824.94px;font:9.6px/1 'Liberation Sans',sans-serif;color:#555;letter-spacing:-0.111px;">Română (Republica Moldova)</span>
<svg class="a" style="left:287.50px;top:823.50px;" width="13" height="12" viewBox="0 0 13 12"><circle cx="5.500" cy="2" r="1.500" fill="#444"/><path d="M1 4.500h9M5.500 4.500v3.500M5.500 8l-2.500 3.500M5.500 8l1.500 2" stroke="#444" stroke-width="1.200" fill="none"/><path d="M8.500 8l3.500 3.500M12 8l-3.500 3.500" stroke="#444" stroke-width="1.200"/></svg>
<span class="t" style="left:303.40px;top:824.94px;font:bold 9.6px/1 'Liberation Sans',sans-serif;color:#333;letter-spacing:-0.153px;">Accesibilitate: investigați</span>
<svg class="a" style="left:934.50px;top:824.50px;" width="10" height="10" viewBox="0 0 10 10"><path d="M0.500 4.500h9M0.500 7h9M0.500 9.500h6" stroke="#666" stroke-width="1"/><path d="M5 0l2.500 3h-5z" fill="#666"/></svg>
<span class="t" style="left:949.00px;top:824.94px;font:9.6px/1 'Liberation Sans',sans-serif;color:#444;letter-spacing:0.055px;">Note</span>
<svg class="a" style="left:987.50px;top:823.50px;" width="13" height="11" viewBox="0 0 13 11"><path d="M0.500 0.500h12v7.500H5l-3 2.500V8H0.500z" fill="#444"/></svg>
<span class="t" style="left:1002.60px;top:824.94px;font:9.6px/1 'Liberation Sans',sans-serif;color:#444;letter-spacing:-0.102px;">Comentarii</span>
<div style="left:1065.50px;top:821.00px;width:35.20px;height:18.20px;background:#c9c9c9;"></div>
<svg class="a" style="left:1076.00px;top:824.00px;" width="13" height="12" viewBox="0 0 13 12"><rect x="0.600" y="0.600" width="11.800" height="10.800" fill="none" stroke="#777" stroke-width="1.100"/><rect x="3.500" y="2.800" width="7" height="5" fill="none" stroke="#777" stroke-width="1"/><path d="M1 9.500h11" stroke="#777" stroke-width="1"/></svg>
<svg class="a" style="left:1112.50px;top:824.00px;" width="13" height="12" viewBox="0 0 13 12"><g fill="none" stroke="#777" stroke-width="1.100"><rect x="0.600" y="0.600" width="4.800" height="4"/><rect x="7.600" y="0.600" width="4.800" height="4"/><rect x="0.600" y="7" width="4.800" height="4"/><rect x="7.600" y="7" width="4.800" height="4"/></g></svg>
<svg class="a" style="left:1148.00px;top:824.00px;" width="13" height="12" viewBox="0 0 13 12"><path d="M0.600 1h5.400v9H0.600zM7 1h5.400v9H7z" fill="none" stroke="#777" stroke-width="1.100"/><path d="M2 3.500h2.500M2 5.500h2.500M8.500 3.500H11M8.500 5.500H11" stroke="#999" stroke-width=".9"/></svg>
<svg class="a" style="left:1184.00px;top:823.50px;" width="13" height="13" viewBox="0 0 13 13"><path d="M0.500 1h12M1.500 1v6.500h10V1M6.500 7.500v3.500M4 11.500h5" fill="none" stroke="#777" stroke-width="1.100"/></svg>
<div style="left:1214.00px;top:829.80px;width:6.00px;height:1.10px;background:#777;"></div>
<div style="left:1225.00px;top:829.80px;width:89.00px;height:1.10px;background:#9a9a9a;"></div>
<div style="left:1269.50px;top:827.50px;width:1.00px;height:5.50px;background:#9a9a9a;"></div>
<div style="left:1247.70px;top:824.60px;width:3.60px;height:11.40px;background:#444;"></div>
<div style="left:1319.50px;top:829.80px;width:6.50px;height:1.10px;background:#777;"></div>
<div style="left:1322.20px;top:827.20px;width:1.10px;height:6.50px;background:#777;"></div>
<span class="t" style="left:1337.00px;top:824.94px;font:9.6px/1 'Liberation Sans',sans-serif;color:#555;letter-spacing:-0.345px;">55 %</span>
<svg class="a" style="left:1371.00px;top:824.50px;" width="10" height="10" viewBox="0 0 10 10"><rect x="0.500" y="0.500" width="9" height="9" fill="none" stroke="#777" stroke-width="1"/><path d="M2.500 4V2.500H4M6 2.500h1.500V4M7.500 6v1.500H6M4 7.500H2.500V6" fill="none" stroke="#777" stroke-width=".9"/></svg>
</body></html>
